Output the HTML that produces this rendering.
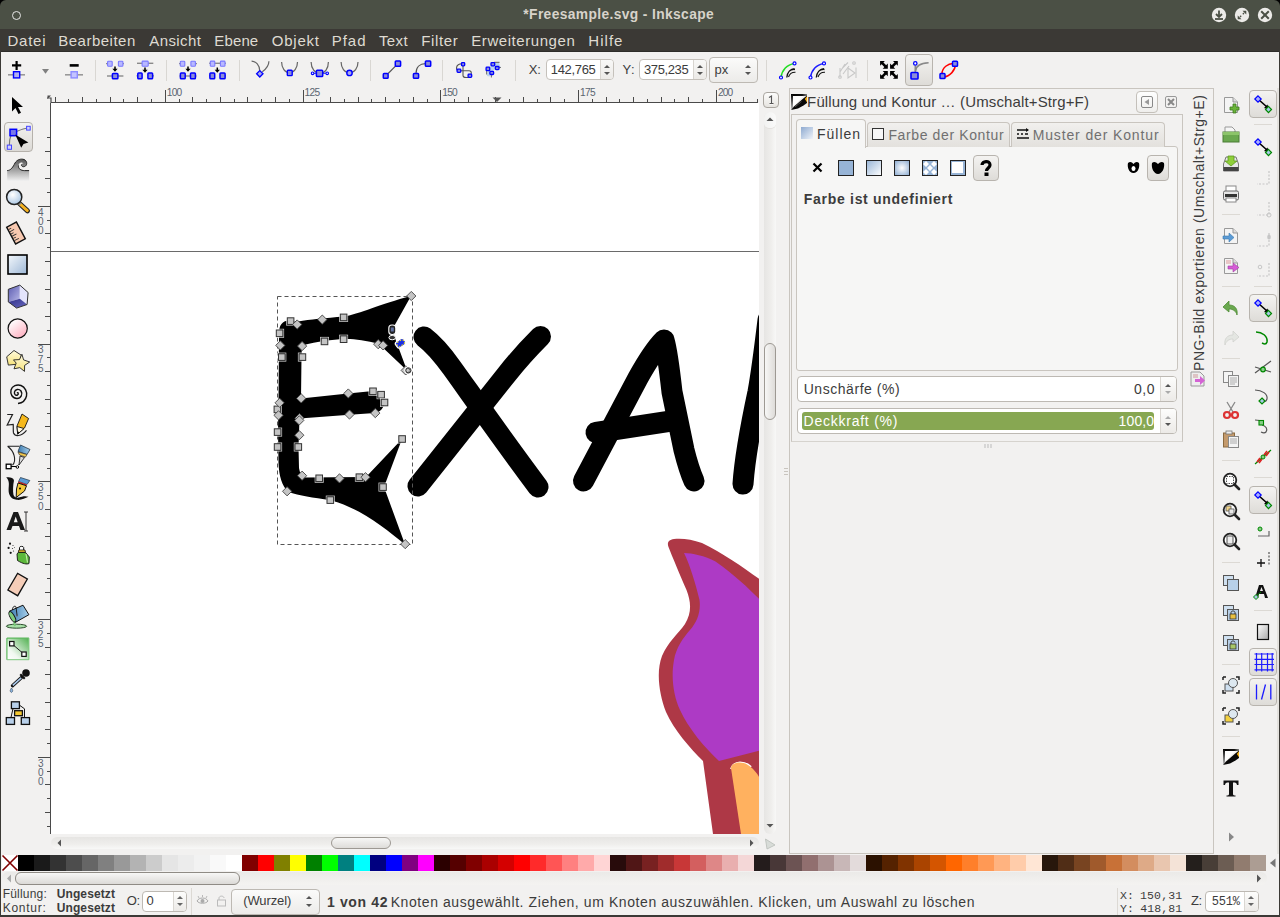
<!DOCTYPE html><html><head><meta charset="utf-8"><style>
*{box-sizing:border-box}
html,body{margin:0;padding:0}
body{width:1280px;height:917px;position:relative;overflow:hidden;background:#f2f1f0;font-family:"Liberation Sans",sans-serif;color:#3c3c3c}
.a{position:absolute}
.t{position:absolute;white-space:nowrap;line-height:1}
svg{position:absolute;overflow:visible}
</style></head><body>
<div class="a" style="left:0;top:0;width:1280px;height:29px;background:#000"></div><div class="a" style="left:0;top:0;width:1280px;height:29px;background:#4b5045;border-radius:6px 6px 0 0"></div><div class="a" style="left:12px;top:11px;width:9px;height:9px;border:1.3px solid #e6e6e6;border-radius:50%"></div><div class="t" style="left:523.33px;top:8.13px;font-size:13.8px;letter-spacing:0.375px;color:#dfdbd2;font-family:'Liberation Sans',sans-serif;font-weight:bold;-webkit-text-stroke:0;font-weight:600;opacity:0.95">*Freesample.svg - Inkscape</div><svg style="left:1219px;top:15px" width="1" height="1"><circle r="7.2" fill="#ecebe8"/><path d="M0,-4.5V1.5M-3,-1L0,2L3,-1" stroke="#4b5045" stroke-width="1.8" fill="none"/><path d="M-4,4H4" stroke="#4b5045" stroke-width="1.8"/></svg><svg style="left:1242px;top:15px" width="1" height="1"><circle r="7.2" fill="#ecebe8"/><path d="M0.5,-4.3H4.3V-0.5Z M-0.5,4.3H-4.3V0.5Z" fill="#4b5045"/><path d="M2,-2L0.8,-0.8M-2,2L-0.8,0.8" stroke="#4b5045" stroke-width="1.3"/></svg><svg style="left:1265px;top:15px" width="1" height="1"><circle r="7.2" fill="#ecebe8"/><path d="M-3.8,-3.8L3.8,3.8M3.8,-3.8L-3.8,3.8" stroke="#4b5045" stroke-width="2" fill="none"/></svg><div class="a" style="left:0;top:29px;width:1280px;height:23px;background:#3b3935"></div><div class="a" style="left:0;top:51px;width:1280px;height:1px;background:#2e2d2a"></div><div class="t" style="left:7.55px;top:33.31px;font-size:15px;letter-spacing:0.744px;color:#dfdbd2;font-family:'Liberation Sans',sans-serif;">Datei</div><div class="t" style="left:58.30px;top:33.31px;font-size:15px;letter-spacing:0.489px;color:#dfdbd2;font-family:'Liberation Sans',sans-serif;">Bearbeiten</div><div class="t" style="left:149.25px;top:33.31px;font-size:15px;letter-spacing:0.408px;color:#dfdbd2;font-family:'Liberation Sans',sans-serif;">Ansicht</div><div class="t" style="left:214.30px;top:33.31px;font-size:15px;letter-spacing:0.131px;color:#dfdbd2;font-family:'Liberation Sans',sans-serif;">Ebene</div><div class="t" style="left:271.82px;top:33.31px;font-size:15px;letter-spacing:0.745px;color:#dfdbd2;font-family:'Liberation Sans',sans-serif;">Objekt</div><div class="t" style="left:331.80px;top:33.31px;font-size:15px;letter-spacing:0.950px;color:#dfdbd2;font-family:'Liberation Sans',sans-serif;">Pfad</div><div class="t" style="left:378.95px;top:33.31px;font-size:15px;letter-spacing:0.392px;color:#dfdbd2;font-family:'Liberation Sans',sans-serif;">Text</div><div class="t" style="left:421.30px;top:33.31px;font-size:15px;letter-spacing:0.625px;color:#dfdbd2;font-family:'Liberation Sans',sans-serif;">Filter</div><div class="t" style="left:471.30px;top:33.31px;font-size:15px;letter-spacing:0.562px;color:#dfdbd2;font-family:'Liberation Sans',sans-serif;">Erweiterungen</div><div class="t" style="left:588.30px;top:33.31px;font-size:15px;letter-spacing:1.031px;color:#dfdbd2;font-family:'Liberation Sans',sans-serif;">Hilfe</div><div class="a" style="left:0;top:29px;width:1px;height:888px;background:#3b3935"></div><div class="a" style="left:1279px;top:29px;width:1px;height:888px;background:#3b3935"></div><div class="a" style="left:0;top:915px;width:1280px;height:2px;background:#3b3935"></div><svg style="left:5px;top:56px;" width="24" height="26" viewBox="0 0 24 26"><path d="M11.6,5V14M7,9.4H16.2" stroke="#000" stroke-width="2.2"/><path d="M3,18.8H20" stroke="#999" stroke-width="1.6"/><rect x="8.5" y="15.700000000000001" width="6.2" height="6.2" fill="#b0b0f0" stroke="#0000ff" stroke-width="1.4"/></svg><svg style="left:40px;top:66px;" width="12" height="10" viewBox="0 0 12 10"><path d="M2,3H9L5.5,7.8Z" fill="#808080"/></svg><svg style="left:62px;top:56px;" width="24" height="26" viewBox="0 0 24 26"><path d="M7.7,9.4H16.7" stroke="#000" stroke-width="2.6"/><path d="M3,18.8H21" stroke="#999" stroke-width="1.6"/><rect x="9.1" y="15.700000000000001" width="6.2" height="6.2" fill="#c4c4ff" stroke="#8c8cff" stroke-width="1.4"/></svg><div class="a" style="left:95px;top:60px;width:1px;height:21px;background:#d9d7d3"></div><svg style="left:0;top:52px" width="1280" height="36" viewBox="0 52 1280 36"><path d="M106,63.7H108" stroke="#8a8a8a" stroke-width="1.2"/><path d="M122.5,63.7H124" stroke="#8a8a8a" stroke-width="1.2"/><rect x="107.6" y="61.3" width="4.6000000000000085" height="4.900000000000006" rx="0.8" fill="#b8b8ff" stroke="#7a7aff" stroke-width="1.1"/><rect x="118.4" y="61.3" width="4.5" height="4.900000000000006" rx="0.8" fill="#b8b8ff" stroke="#7a7aff" stroke-width="1.1"/><path d="M115,66.5V69.8" stroke="#000" stroke-width="1.5"/><path d="M112.4,68.8H117.6L115,71.8Z" fill="#000"/><path d="M107,76H123.4" stroke="#8a8a8a" stroke-width="1.4"/><rect x="112.4" y="73.4" width="5.5" height="5.3999999999999915" rx="0.8" fill="#8c8cd8" stroke="#0000ff" stroke-width="1.5"/><path d="M137,63.3H153.3" stroke="#8a8a8a" stroke-width="1.4"/><rect x="142.1" y="61.1" width="6.099999999999994" height="5.100000000000001" rx="0.8" fill="#b8b8ff" stroke="#7a7aff" stroke-width="1.1"/><path d="M145,67.5V70.8" stroke="#000" stroke-width="1.5"/><path d="M142.4,69.8H147.6L145,72.8Z" fill="#000"/><path d="M136.5,75.8H138" stroke="#8a8a8a" stroke-width="1.2"/><path d="M152.3,75.8H154" stroke="#8a8a8a" stroke-width="1.2"/><rect x="137.8" y="73" width="4.299999999999983" height="5.700000000000003" rx="0.8" fill="#8c8cd8" stroke="#0000ff" stroke-width="1.5"/><rect x="147.9" y="73" width="4.699999999999989" height="5.700000000000003" rx="0.8" fill="#8c8cd8" stroke="#0000ff" stroke-width="1.5"/><path d="M179,63.7H181" stroke="#8a8a8a" stroke-width="1.2"/><path d="M195,63.7H197" stroke="#8a8a8a" stroke-width="1.2"/><rect x="180.3" y="61.3" width="4.5" height="4.900000000000006" rx="0.8" fill="#b8b8ff" stroke="#7a7aff" stroke-width="1.1"/><rect x="190.9" y="61.3" width="4.5" height="4.900000000000006" rx="0.8" fill="#b8b8ff" stroke="#7a7aff" stroke-width="1.1"/><path d="M188,66.5V69.8" stroke="#000" stroke-width="1.5"/><path d="M185.4,68.8H190.6L188,71.8Z" fill="#000"/><path d="M179.5,76H196.5" stroke="#8a8a8a" stroke-width="1.4"/><rect x="180.4" y="73" width="4.799999999999983" height="5.700000000000003" rx="0.8" fill="#8c8cd8" stroke="#0000ff" stroke-width="1.5"/><rect x="190.5" y="73" width="4.900000000000006" height="5.700000000000003" rx="0.8" fill="#8c8cd8" stroke="#0000ff" stroke-width="1.5"/><path d="M209.2,63.3H225.9" stroke="#8a8a8a" stroke-width="1.4"/><rect x="210.3" y="61.1" width="4.5" height="5.100000000000001" rx="0.8" fill="#b8b8ff" stroke="#7a7aff" stroke-width="1.1"/><rect x="220.4" y="61.1" width="4.599999999999994" height="5.100000000000001" rx="0.8" fill="#b8b8ff" stroke="#7a7aff" stroke-width="1.1"/><path d="M217.3,67.5V70.8" stroke="#000" stroke-width="1.5"/><path d="M214.70000000000002,69.8H219.9L217.3,72.8Z" fill="#000"/><path d="M209,75.8H210" stroke="#8a8a8a" stroke-width="1.2"/><path d="M224.5,75.8H226" stroke="#8a8a8a" stroke-width="1.2"/><rect x="209.9" y="73" width="4.799999999999983" height="5.700000000000003" rx="0.8" fill="#8c8cd8" stroke="#0000ff" stroke-width="1.5"/><rect x="220" y="73" width="5.099999999999994" height="5.700000000000003" rx="0.8" fill="#8c8cd8" stroke="#0000ff" stroke-width="1.5"/><path d="M251.6,61.2C256,61.5 259.6,65 259.8,71M262.3,71.8C266,69 268.9,65 268.9,61.2" stroke="#666" stroke-width="1.2" fill="none"/><path d="M259.8,70.6L263,73.8L259.8,77L256.6,73.8Z" fill="#a8a8e8" stroke="#00f" stroke-width="1.3"/><path d="M281.6,62.1C281.6,68 285,72.9 289.5,72.9C294,72.9 297.5,68 297.5,62.1" stroke="#666" stroke-width="1.2" fill="none"/><rect x="287.3" y="70.3" width="4.899999999999977" height="5.299999999999997" rx="0.8" fill="#8c8cd8" stroke="#0000ff" stroke-width="1.4"/><path d="M311.1,62.1C311.1,68.5 315,73.3 320,73.3C325,73.3 328.4,68.5 328.4,62.1" stroke="#666" stroke-width="1.2" fill="none"/><path d="M313,73.3H327" stroke="#00f" stroke-width="0.9"/><circle cx="312.6" cy="73.3" r="1.3" fill="#fff" stroke="#00f" stroke-width="1.1"/><circle cx="327.2" cy="73.3" r="1.3" fill="#fff" stroke="#00f" stroke-width="1.1"/><rect x="316.4" y="70.3" width="6.300000000000011" height="6.200000000000003" rx="0.8" fill="#8c8cd8" stroke="#0000ff" stroke-width="1.5"/><path d="M341.1,62.1C341.1,68 344.5,72.9 349.5,72.9C354.5,72.9 358,68 358,62.1" stroke="#666" stroke-width="1.2" fill="none"/><circle cx="349.5" cy="72.9" r="2.7" fill="#a8a8e8" stroke="#00f" stroke-width="1.4"/><path d="M385.6,76L398,63.6" stroke="#555" stroke-width="1.2"/><rect x="383.3" y="73.6" width="4.800000000000011" height="4.700000000000003" rx="0.8" fill="#8c8cd8" stroke="#0000ff" stroke-width="1.5"/><rect x="395.3" y="61" width="5.300000000000011" height="5.299999999999997" rx="0.8" fill="#8c8cd8" stroke="#0000ff" stroke-width="1.5"/><path d="M416,73.5C416,67 420,63.6 425.5,63.6" stroke="#555" stroke-width="1.2" fill="none"/><rect x="413.4" y="73.6" width="5.2000000000000455" height="4.700000000000003" rx="0.8" fill="#8c8cd8" stroke="#0000ff" stroke-width="1.5"/><rect x="425.4" y="61" width="5.300000000000011" height="5.299999999999997" rx="0.8" fill="#8c8cd8" stroke="#0000ff" stroke-width="1.5"/><path d="M463,63.8C459,63.5 456.5,65 456.5,68C456.5,70 457.5,71 459,70.8H469C471,70.8 471.5,72 471.2,74M463,64V75.5C463,77 464,77.5 466,77.5H469" stroke="#555" stroke-width="1.1" fill="none"/><rect x="461.5" y="62.6" width="3.1999999999999886" height="3.1999999999999957" rx="0.8" fill="#8c8cd8" stroke="#0000ff" stroke-width="1.3"/><rect x="457.1" y="69.2" width="3.6999999999999886" height="3.200000000000003" rx="0.8" fill="#8c8cd8" stroke="#0000ff" stroke-width="1.3"/><rect x="468.1" y="74.1" width="3.599999999999966" height="3.200000000000003" rx="0.8" fill="#8c8cd8" stroke="#0000ff" stroke-width="1.3"/><path d="M487,76C487,70 490,64 497,62.5L499,63L500.5,67L494,70L491,74L489.5,76.5Z" fill="#bcd3ea"/><path d="M494,62.4H499.5M499,67.5H501M491.4,74V77.5M486.6,70V74.5" stroke="#777" stroke-width="1.1"/><rect x="491" y="62.7" width="3.6999999999999886" height="3.0999999999999943" rx="0.8" fill="#8c8cd8" stroke="#0000ff" stroke-width="1.3"/><rect x="486.1" y="67.1" width="3.599999999999966" height="3.6000000000000085" rx="0.8" fill="#8c8cd8" stroke="#0000ff" stroke-width="1.3"/><rect x="495.4" y="66.5" width="3.6000000000000227" height="3.0999999999999943" rx="0.8" fill="#8c8cd8" stroke="#0000ff" stroke-width="1.3"/><rect x="489.9" y="71.4" width="3.7000000000000455" height="3.0999999999999943" rx="0.8" fill="#8c8cd8" stroke="#0000ff" stroke-width="1.3"/></svg><div class="a" style="left:95px;top:60px;width:1px;height:21px;background:#d9d7d3"></div><div class="a" style="left:166px;top:60px;width:1px;height:21px;background:#d9d7d3"></div><div class="a" style="left:239px;top:60px;width:1px;height:21px;background:#d9d7d3"></div><div class="a" style="left:370px;top:60px;width:1px;height:21px;background:#d9d7d3"></div><div class="a" style="left:442px;top:60px;width:1px;height:21px;background:#d9d7d3"></div><div class="a" style="left:515px;top:60px;width:1px;height:21px;background:#d9d7d3"></div><div class="t" style="left:528.77px;top:63.20px;font-size:13px;letter-spacing:-0.225px;color:#3c3c3c;font-family:'Liberation Sans',sans-serif;">X:</div><div class="a" style="left:546px;top:59px;width:68px;height:21px;background:#fff;border:1px solid #c5c1bb;border-radius:4px"></div><div class="a" style="left:600px;top:60px;width:13px;height:19px;background:linear-gradient(#f8f8f7,#eceae7);border-left:1px solid #d8d5d0;border-radius:0 3px 3px 0"></div><svg style="left:603.0px;top:62.5px;" width="8" height="14" viewBox="0 0 8 14"><path d="M1,5L4,2L7,5Z" fill="#555"/><path d="M1,9L4,12L7,9Z" fill="#555"/></svg><div class="t" style="left:550.82px;top:63.20px;font-size:13px;letter-spacing:-0.333px;color:#3c3c3c;font-family:'Liberation Sans',sans-serif;">142,765</div><div class="t" style="left:622.57px;top:63.20px;font-size:13px;letter-spacing:0.490px;color:#3c3c3c;font-family:'Liberation Sans',sans-serif;">Y:</div><div class="a" style="left:639px;top:59px;width:68px;height:21px;background:#fff;border:1px solid #c5c1bb;border-radius:4px"></div><div class="a" style="left:693px;top:60px;width:13px;height:19px;background:linear-gradient(#f8f8f7,#eceae7);border-left:1px solid #d8d5d0;border-radius:0 3px 3px 0"></div><svg style="left:696.0px;top:62.5px;" width="8" height="14" viewBox="0 0 8 14"><path d="M1,5L4,2L7,5Z" fill="#555"/><path d="M1,9L4,12L7,9Z" fill="#555"/></svg><div class="t" style="left:643.98px;top:63.20px;font-size:13px;letter-spacing:-0.376px;color:#3c3c3c;font-family:'Liberation Sans',sans-serif;">375,235</div><div class="a" style="left:709px;top:57px;width:49px;height:26px;background:linear-gradient(#fbfbfa,#ecebe9);border:1px solid #bdb9b3;border-radius:4px"></div><div class="t" style="left:714.55px;top:63.20px;font-size:13px;letter-spacing:-0.040px;color:#3c3c3c;font-family:'Liberation Sans',sans-serif;">px</div><svg style="left:744px;top:63px;" width="8" height="14" viewBox="0 0 8 14"><path d="M1,5L4,2L7,5Z" fill="#555"/><path d="M1,9L4,12L7,9Z" fill="#555"/></svg><div class="a" style="left:766px;top:60px;width:1px;height:21px;background:#d9d7d3"></div><div class="a" style="left:905px;top:54px;width:28px;height:32px;background:linear-gradient(#f4f3f1,#dedcd8);border:1px solid #b8b4ae;border-radius:4px;z-index:-0"></div><svg style="left:0;top:52px" width="1280" height="36" viewBox="0 52 1280 36"><g transform="translate(0,0)"><path d="M781,77.5C782,70 787,64.5 794.3,63.4" stroke="#22dd22" stroke-width="1.5" fill="none"/><path d="M786.8,77.5C787.5,72 790,69 795,69.5M789.5,71C791,69.5 792.5,68.8 794.5,68.6" stroke="#111" stroke-width="1.3" fill="none"/><path d="M788.5,77C789.5,74 791,72 795.5,72.2" stroke="#111" stroke-width="1.1" fill="none"/><circle cx="781" cy="77.5" r="1.5" fill="#fff" stroke="#00f" stroke-width="1.2"/><circle cx="794.5" cy="63.4" r="1.5" fill="#fff" stroke="#00f" stroke-width="1.2"/></g><g transform="translate(29.5,0)"><path d="M781,77.5C782,70 787,64.5 794.3,63.4" stroke="#1c1cff" stroke-width="1.5" fill="none"/><path d="M786.8,77.5C787.5,72 790,69 795,69.5M789.5,71C791,69.5 792.5,68.8 794.5,68.6" stroke="#111" stroke-width="1.3" fill="none"/><path d="M788.5,77C789.5,74 791,72 795.5,72.2" stroke="#111" stroke-width="1.1" fill="none"/><circle cx="781" cy="77.5" r="1.5" fill="#fff" stroke="#00f" stroke-width="1.2"/><circle cx="794.5" cy="63.4" r="1.5" fill="#fff" stroke="#00f" stroke-width="1.2"/></g><g stroke="#c8c8c8" fill="none" stroke-width="1.1"><path d="M840,77V68M840,72L845,64M842.5,68L848,62.5M843,74L849,66"/><path d="M848,68L855,73L848,78Z"/><path d="M856,67.5V78"/><circle cx="840" cy="77" r="1.3"/><circle cx="854" cy="63" r="1.3"/></g><g transform="translate(880.1,61) scale(1,1)"><path d="M0,0H4.8L0,4.8Z M7.7,7.7H2.6L7.7,2.6Z" fill="#000"/><path d="M1.2,1.2L6.4,6.4" stroke="#000" stroke-width="2.6"/></g><g transform="translate(897.8,61) scale(-1,1)"><path d="M0,0H4.8L0,4.8Z M7.7,7.7H2.6L7.7,2.6Z" fill="#000"/><path d="M1.2,1.2L6.4,6.4" stroke="#000" stroke-width="2.6"/></g><g transform="translate(880.1,78.8) scale(1,-1)"><path d="M0,0H4.8L0,4.8Z M7.7,7.7H2.6L7.7,2.6Z" fill="#000"/><path d="M1.2,1.2L6.4,6.4" stroke="#000" stroke-width="2.6"/></g><g transform="translate(897.8,78.8) scale(-1,-1)"><path d="M0,0H4.8L0,4.8Z M7.7,7.7H2.6L7.7,2.6Z" fill="#000"/><path d="M1.2,1.2L6.4,6.4" stroke="#000" stroke-width="2.6"/></g><path d="M915.3,65.5V72.5" stroke="#888" stroke-width="1.6"/><path d="M915.5,71C916,66 921,63 928.6,62.7" stroke="#888" stroke-width="1.6" fill="none"/><circle cx="915.3" cy="63.4" r="1.7" fill="#fff" stroke="#00f" stroke-width="1.3"/><rect x="911" y="72.5" width="7" height="6.5" rx="0.8" fill="#8c8cd8" stroke="#0000ff" stroke-width="1.6"/><path d="M942,73.8C942,68 948,63 954,63.5M943.5,77C950,76.5 955.5,70 955.3,64.5" stroke="#f00" stroke-width="1.5" fill="none"/><rect x="940" y="73.6" width="5" height="4.900000000000006" rx="0.8" fill="#8c8cd8" stroke="#0000ff" stroke-width="1.5"/><rect x="952.5" y="61.3" width="5.0" height="5.0" rx="0.8" fill="#8c8cd8" stroke="#0000ff" stroke-width="1.5"/></svg><div class="a" style="left:867px;top:60px;width:1px;height:21px;background:#d9d7d3"></div><div class="a" style="left:51px;top:103px;width:708px;height:731px;background:#fff"></div><div class="a" style="left:51px;top:102px;width:707px;height:1px;background:#4a4a4a"></div><div class="a" style="left:50px;top:103px;width:1px;height:731px;background:#4a4a4a"></div><svg style="left:47px;top:95px;" width="6" height="8" viewBox="0 0 6 8"><path d="M0,3H4V8" stroke="#4a4a4a" stroke-width="1.2" fill="none"/><path d="M0.5,0.5L4,0.5L0.5,4Z" fill="#4a4a4a"/></svg><div class="a" style="left:55px;top:97px;width:1px;height:5px;background:#4a4a4a"></div><div class="a" style="left:68px;top:99px;width:1px;height:3px;background:#4a4a4a"></div><div class="a" style="left:82px;top:97px;width:1px;height:5px;background:#4a4a4a"></div><div class="a" style="left:96px;top:99px;width:1px;height:3px;background:#4a4a4a"></div><div class="a" style="left:110px;top:97px;width:1px;height:5px;background:#4a4a4a"></div><div class="a" style="left:123px;top:99px;width:1px;height:3px;background:#4a4a4a"></div><div class="a" style="left:137px;top:97px;width:1px;height:5px;background:#4a4a4a"></div><div class="a" style="left:151px;top:99px;width:1px;height:3px;background:#4a4a4a"></div><div class="a" style="left:165px;top:90px;width:1px;height:12px;background:#4a4a4a"></div><div class="a" style="left:179px;top:99px;width:1px;height:3px;background:#4a4a4a"></div><div class="a" style="left:192px;top:97px;width:1px;height:5px;background:#4a4a4a"></div><div class="a" style="left:206px;top:99px;width:1px;height:3px;background:#4a4a4a"></div><div class="a" style="left:220px;top:97px;width:1px;height:5px;background:#4a4a4a"></div><div class="a" style="left:234px;top:99px;width:1px;height:3px;background:#4a4a4a"></div><div class="a" style="left:247px;top:97px;width:1px;height:5px;background:#4a4a4a"></div><div class="a" style="left:261px;top:99px;width:1px;height:3px;background:#4a4a4a"></div><div class="a" style="left:275px;top:97px;width:1px;height:5px;background:#4a4a4a"></div><div class="a" style="left:289px;top:99px;width:1px;height:3px;background:#4a4a4a"></div><div class="a" style="left:303px;top:90px;width:1px;height:12px;background:#4a4a4a"></div><div class="a" style="left:316px;top:99px;width:1px;height:3px;background:#4a4a4a"></div><div class="a" style="left:330px;top:97px;width:1px;height:5px;background:#4a4a4a"></div><div class="a" style="left:344px;top:99px;width:1px;height:3px;background:#4a4a4a"></div><div class="a" style="left:358px;top:97px;width:1px;height:5px;background:#4a4a4a"></div><div class="a" style="left:371px;top:99px;width:1px;height:3px;background:#4a4a4a"></div><div class="a" style="left:385px;top:97px;width:1px;height:5px;background:#4a4a4a"></div><div class="a" style="left:399px;top:99px;width:1px;height:3px;background:#4a4a4a"></div><div class="a" style="left:413px;top:97px;width:1px;height:5px;background:#4a4a4a"></div><div class="a" style="left:427px;top:99px;width:1px;height:3px;background:#4a4a4a"></div><div class="a" style="left:440px;top:90px;width:1px;height:12px;background:#4a4a4a"></div><div class="a" style="left:454px;top:99px;width:1px;height:3px;background:#4a4a4a"></div><div class="a" style="left:468px;top:97px;width:1px;height:5px;background:#4a4a4a"></div><div class="a" style="left:482px;top:99px;width:1px;height:3px;background:#4a4a4a"></div><div class="a" style="left:495px;top:97px;width:1px;height:5px;background:#4a4a4a"></div><div class="a" style="left:509px;top:99px;width:1px;height:3px;background:#4a4a4a"></div><div class="a" style="left:523px;top:97px;width:1px;height:5px;background:#4a4a4a"></div><div class="a" style="left:537px;top:99px;width:1px;height:3px;background:#4a4a4a"></div><div class="a" style="left:550px;top:97px;width:1px;height:5px;background:#4a4a4a"></div><div class="a" style="left:564px;top:99px;width:1px;height:3px;background:#4a4a4a"></div><div class="a" style="left:578px;top:90px;width:1px;height:12px;background:#4a4a4a"></div><div class="a" style="left:592px;top:99px;width:1px;height:3px;background:#4a4a4a"></div><div class="a" style="left:606px;top:97px;width:1px;height:5px;background:#4a4a4a"></div><div class="a" style="left:619px;top:99px;width:1px;height:3px;background:#4a4a4a"></div><div class="a" style="left:633px;top:97px;width:1px;height:5px;background:#4a4a4a"></div><div class="a" style="left:647px;top:99px;width:1px;height:3px;background:#4a4a4a"></div><div class="a" style="left:661px;top:97px;width:1px;height:5px;background:#4a4a4a"></div><div class="a" style="left:674px;top:99px;width:1px;height:3px;background:#4a4a4a"></div><div class="a" style="left:688px;top:97px;width:1px;height:5px;background:#4a4a4a"></div><div class="a" style="left:702px;top:99px;width:1px;height:3px;background:#4a4a4a"></div><div class="a" style="left:716px;top:90px;width:1px;height:12px;background:#4a4a4a"></div><div class="a" style="left:730px;top:99px;width:1px;height:3px;background:#4a4a4a"></div><div class="a" style="left:743px;top:97px;width:1px;height:5px;background:#4a4a4a"></div><div class="a" style="left:757px;top:99px;width:1px;height:3px;background:#4a4a4a"></div><div class="t" style="left:166.74px;top:88.27px;font-size:10.2px;letter-spacing:-0.730px;color:#5a6570;font-family:'Liberation Sans',sans-serif;">100</div><div class="t" style="left:304.49px;top:88.27px;font-size:10.2px;letter-spacing:-0.705px;color:#5a6570;font-family:'Liberation Sans',sans-serif;">125</div><div class="t" style="left:442.24px;top:88.27px;font-size:10.2px;letter-spacing:-0.730px;color:#5a6570;font-family:'Liberation Sans',sans-serif;">150</div><div class="t" style="left:579.99px;top:88.27px;font-size:10.2px;letter-spacing:-0.705px;color:#5a6570;font-family:'Liberation Sans',sans-serif;">175</div><div class="t" style="left:717.99px;top:88.27px;font-size:10.2px;letter-spacing:-0.858px;color:#5a6570;font-family:'Liberation Sans',sans-serif;">200</div><svg style="left:492px;top:97px;" width="10" height="6" viewBox="0 0 10 6"><path d="M0.5,0.5H9.5L5,5Z" fill="#555"/></svg><div class="a" style="left:47px;top:137px;width:3px;height:1px;background:#4a4a4a"></div><div class="a" style="left:45px;top:151px;width:5px;height:1px;background:#4a4a4a"></div><div class="a" style="left:47px;top:165px;width:3px;height:1px;background:#4a4a4a"></div><div class="a" style="left:45px;top:178px;width:5px;height:1px;background:#4a4a4a"></div><div class="a" style="left:47px;top:192px;width:3px;height:1px;background:#4a4a4a"></div><div class="a" style="left:38px;top:206px;width:12px;height:1px;background:#4a4a4a"></div><div class="a" style="left:47px;top:220px;width:3px;height:1px;background:#4a4a4a"></div><div class="a" style="left:45px;top:233px;width:5px;height:1px;background:#4a4a4a"></div><div class="a" style="left:47px;top:247px;width:3px;height:1px;background:#4a4a4a"></div><div class="a" style="left:45px;top:261px;width:5px;height:1px;background:#4a4a4a"></div><div class="a" style="left:47px;top:275px;width:3px;height:1px;background:#4a4a4a"></div><div class="a" style="left:45px;top:289px;width:5px;height:1px;background:#4a4a4a"></div><div class="a" style="left:47px;top:302px;width:3px;height:1px;background:#4a4a4a"></div><div class="a" style="left:45px;top:316px;width:5px;height:1px;background:#4a4a4a"></div><div class="a" style="left:47px;top:330px;width:3px;height:1px;background:#4a4a4a"></div><div class="a" style="left:38px;top:344px;width:12px;height:1px;background:#4a4a4a"></div><div class="a" style="left:47px;top:357px;width:3px;height:1px;background:#4a4a4a"></div><div class="a" style="left:45px;top:371px;width:5px;height:1px;background:#4a4a4a"></div><div class="a" style="left:47px;top:385px;width:3px;height:1px;background:#4a4a4a"></div><div class="a" style="left:45px;top:399px;width:5px;height:1px;background:#4a4a4a"></div><div class="a" style="left:47px;top:413px;width:3px;height:1px;background:#4a4a4a"></div><div class="a" style="left:45px;top:426px;width:5px;height:1px;background:#4a4a4a"></div><div class="a" style="left:47px;top:440px;width:3px;height:1px;background:#4a4a4a"></div><div class="a" style="left:45px;top:454px;width:5px;height:1px;background:#4a4a4a"></div><div class="a" style="left:47px;top:468px;width:3px;height:1px;background:#4a4a4a"></div><div class="a" style="left:38px;top:481px;width:12px;height:1px;background:#4a4a4a"></div><div class="a" style="left:47px;top:495px;width:3px;height:1px;background:#4a4a4a"></div><div class="a" style="left:45px;top:509px;width:5px;height:1px;background:#4a4a4a"></div><div class="a" style="left:47px;top:523px;width:3px;height:1px;background:#4a4a4a"></div><div class="a" style="left:45px;top:536px;width:5px;height:1px;background:#4a4a4a"></div><div class="a" style="left:47px;top:550px;width:3px;height:1px;background:#4a4a4a"></div><div class="a" style="left:45px;top:564px;width:5px;height:1px;background:#4a4a4a"></div><div class="a" style="left:47px;top:578px;width:3px;height:1px;background:#4a4a4a"></div><div class="a" style="left:45px;top:592px;width:5px;height:1px;background:#4a4a4a"></div><div class="a" style="left:47px;top:605px;width:3px;height:1px;background:#4a4a4a"></div><div class="a" style="left:38px;top:619px;width:12px;height:1px;background:#4a4a4a"></div><div class="a" style="left:47px;top:633px;width:3px;height:1px;background:#4a4a4a"></div><div class="a" style="left:45px;top:647px;width:5px;height:1px;background:#4a4a4a"></div><div class="a" style="left:47px;top:660px;width:3px;height:1px;background:#4a4a4a"></div><div class="a" style="left:45px;top:674px;width:5px;height:1px;background:#4a4a4a"></div><div class="a" style="left:47px;top:688px;width:3px;height:1px;background:#4a4a4a"></div><div class="a" style="left:45px;top:702px;width:5px;height:1px;background:#4a4a4a"></div><div class="a" style="left:47px;top:716px;width:3px;height:1px;background:#4a4a4a"></div><div class="a" style="left:45px;top:729px;width:5px;height:1px;background:#4a4a4a"></div><div class="a" style="left:47px;top:743px;width:3px;height:1px;background:#4a4a4a"></div><div class="a" style="left:38px;top:757px;width:12px;height:1px;background:#4a4a4a"></div><div class="a" style="left:47px;top:771px;width:3px;height:1px;background:#4a4a4a"></div><div class="a" style="left:45px;top:784px;width:5px;height:1px;background:#4a4a4a"></div><div class="a" style="left:47px;top:798px;width:3px;height:1px;background:#4a4a4a"></div><div class="a" style="left:45px;top:812px;width:5px;height:1px;background:#4a4a4a"></div><div class="a" style="left:47px;top:826px;width:3px;height:1px;background:#4a4a4a"></div><div class="t" style="left:38.10px;top:207.74px;font-size:10px;letter-spacing:0.000px;color:#5a6570;font-family:'Liberation Sans',sans-serif;">4</div><div class="t" style="left:37.90px;top:216.94px;font-size:10px;letter-spacing:0.000px;color:#5a6570;font-family:'Liberation Sans',sans-serif;">0</div><div class="t" style="left:37.90px;top:226.14px;font-size:10px;letter-spacing:0.000px;color:#5a6570;font-family:'Liberation Sans',sans-serif;">0</div><div class="t" style="left:37.90px;top:345.49px;font-size:10px;letter-spacing:0.000px;color:#5a6570;font-family:'Liberation Sans',sans-serif;">3</div><div class="t" style="left:37.80px;top:354.69px;font-size:10px;letter-spacing:0.000px;color:#5a6570;font-family:'Liberation Sans',sans-serif;">7</div><div class="t" style="left:37.90px;top:363.89px;font-size:10px;letter-spacing:0.000px;color:#5a6570;font-family:'Liberation Sans',sans-serif;">5</div><div class="t" style="left:37.90px;top:483.24px;font-size:10px;letter-spacing:0.000px;color:#5a6570;font-family:'Liberation Sans',sans-serif;">3</div><div class="t" style="left:37.90px;top:492.44px;font-size:10px;letter-spacing:0.000px;color:#5a6570;font-family:'Liberation Sans',sans-serif;">5</div><div class="t" style="left:37.90px;top:501.64px;font-size:10px;letter-spacing:0.000px;color:#5a6570;font-family:'Liberation Sans',sans-serif;">0</div><div class="t" style="left:37.90px;top:620.99px;font-size:10px;letter-spacing:0.000px;color:#5a6570;font-family:'Liberation Sans',sans-serif;">3</div><div class="t" style="left:37.80px;top:630.19px;font-size:10px;letter-spacing:0.000px;color:#5a6570;font-family:'Liberation Sans',sans-serif;">2</div><div class="t" style="left:37.90px;top:639.39px;font-size:10px;letter-spacing:0.000px;color:#5a6570;font-family:'Liberation Sans',sans-serif;">5</div><div class="t" style="left:37.90px;top:758.74px;font-size:10px;letter-spacing:0.000px;color:#5a6570;font-family:'Liberation Sans',sans-serif;">3</div><div class="t" style="left:37.90px;top:767.94px;font-size:10px;letter-spacing:0.000px;color:#5a6570;font-family:'Liberation Sans',sans-serif;">0</div><div class="t" style="left:37.90px;top:777.14px;font-size:10px;letter-spacing:0.000px;color:#5a6570;font-family:'Liberation Sans',sans-serif;">0</div><div class="a" style="left:51px;top:251px;width:708px;height:1px;background:#6a6a6a"></div><svg width="0" height="0" style="position:absolute"><defs>
<linearGradient id="gRect" x1="0" y1="0" x2="1" y2="1"><stop offset="0" stop-color="#f4f8fc"/><stop offset="1" stop-color="#9db7d6"/></linearGradient>
<linearGradient id="gPink" x1="0" y1="0" x2="0" y2="1"><stop offset="0" stop-color="#fff"/><stop offset="1" stop-color="#ffa3b8"/></linearGradient>
<linearGradient id="gWave" x1="0" y1="0" x2="0" y2="1"><stop offset="0" stop-color="#505050"/><stop offset="1" stop-color="#d0d0d0"/></linearGradient>
<linearGradient id="gGreen" x1="0" y1="0" x2="1" y2="1"><stop offset="0" stop-color="#e8f5e8"/><stop offset="1" stop-color="#3aa83a"/></linearGradient>
<linearGradient id="gBlue" x1="0" y1="0" x2="1" y2="0"><stop offset="0" stop-color="#3b7bb0"/><stop offset="1" stop-color="#a8d0ec"/></linearGradient>
<linearGradient id="gBox" x1="0" y1="0" x2="1" y2="0"><stop offset="0" stop-color="#6a6ab0"/><stop offset="1" stop-color="#c8c8f0"/></linearGradient>
<radialGradient id="gLens" cx=".4" cy=".35" r=".7"><stop offset="0" stop-color="#fff"/><stop offset="1" stop-color="#a9c6e3"/></radialGradient>
</defs></svg><svg style="left:5px;top:93px" width="24" height="24" viewBox="0 0 24 24"><path d="M7,4V18.5L10.5,15L13.5,21L16,19.8L13,14H18Z" fill="#000"/></svg><div class="a" style="left:4px;top:122px;width:29px;height:30px;background:linear-gradient(#f3f2f0,#dcdad6);border:1px solid #b5b1ab;border-radius:4px"></div><svg style="left:5px;top:125px" width="24" height="24" viewBox="0 0 24 24"><path d="M4.4,20C4.4,12 6,8 10,7C14,5.5 18,3.5 22,3.2" stroke="#777" stroke-width="1.1" fill="none"/><rect x="5" y="4.3" width="6.6" height="6.4" fill="#7878e8" stroke="#00f" stroke-width="1.5"/><rect x="21.6" y="1.3" width="3.6" height="3.8" fill="#d0d0ff" stroke="#44f" stroke-width="1"/><rect x="2.3" y="20.1" width="4.2" height="4.2" fill="#d0d0ff" stroke="#44f" stroke-width="1"/><path d="M10.2,9.6L23.4,17.6L18.5,19L16.2,22.8Z" fill="#000"/></svg><svg style="left:5px;top:157px" width="24" height="24" viewBox="0 0 24 24"><defs><linearGradient id="gWv" x1="0" y1="0" x2="0" y2="1"><stop offset="0" stop-color="#555"/><stop offset="1" stop-color="#f0f0f0"/></linearGradient></defs><path d="M2.2,23.9V13.6C6,13.4 8,10 10,6C12,2.5 16,1.5 19,2.5C22,3.5 22.5,7.5 20.5,9C18.5,10.5 16,9.5 16.5,7.5C17,6 18.5,6.5 18.5,7C17,4.5 14,5.5 13.5,8.5C13,12 16,13.5 19.5,13.6H24.1V23.9Z" fill="url(#gWv)"/><path d="M2.2,13.6C6,13.4 8,10 10,6C12,2.5 16,1.5 19,2.5C22,3.5 22.5,7.5 20.5,9C18.5,10.5 16,9.5 16.5,7.5M13.5,8.5C13,12 16,13.5 19.5,13.6H24.1" stroke="#222" stroke-width="1" fill="none"/></svg><svg style="left:5px;top:189px" width="24" height="24" viewBox="0 0 24 24"><path d="M14.5,14.5L22.5,21.8" stroke="#222" stroke-width="5" stroke-linecap="round"/><path d="M15,15L22.3,21.6" stroke="#f5b120" stroke-width="3" stroke-linecap="round"/><path d="M13.5,13.5L15.5,15.5" stroke="#888" stroke-width="3"/><circle cx="9.2" cy="8" r="7.6" fill="url(#gLens)" stroke="#222" stroke-width="1.5"/></svg><svg style="left:5px;top:221px" width="24" height="24" viewBox="0 0 24 24"><g transform="rotate(-28 11 12)"><rect x="5.5" y="2.5" width="11" height="19" fill="#f8c9b0" stroke="#111" stroke-width="1.4"/><path d="M6,5.5H9M6,8H11M6,10.5H9M6,13H11M6,15.5H9M6,18H11" stroke="#333" stroke-width="0.9"/></g></svg><svg style="left:5px;top:253px" width="24" height="24" viewBox="0 0 24 24"><rect x="3" y="2" width="19" height="19" fill="url(#gRect)" stroke="#000" stroke-width="1.6"/></svg><svg style="left:5px;top:285px" width="24" height="24" viewBox="0 0 24 24"><defs><linearGradient id="gBL" x1="0" y1="0" x2="1" y2="1"><stop offset="0" stop-color="#5a5ab0"/><stop offset="1" stop-color="#b8b8e8"/></linearGradient><linearGradient id="gBB" x1="0" y1="0" x2="1" y2="1"><stop offset="0" stop-color="#303088"/><stop offset="1" stop-color="#6868c0"/></linearGradient></defs><path d="M3.3,4.3L14.8,0.1L14.8,13.7L3.3,16.9Z" fill="url(#gBL)"/><path d="M14.8,0.1L23.1,7.5L22.1,19.5L14.8,13.7Z" fill="#e4e4fc"/><path d="M3.3,16.9L14.8,13.7L22.1,19.5L11.6,23.1Z" fill="url(#gBB)"/><path d="M3.3,4.3L14.8,0.1L23.1,7.5L22.1,19.5L11.6,23.1L3.3,16.9Z" fill="none" stroke="#333" stroke-width="1"/></svg><svg style="left:5px;top:317px" width="24" height="24" viewBox="0 0 24 24"><defs><linearGradient id="gPk2" x1="0.2" y1="0.1" x2="0.8" y2="0.9"><stop offset="0" stop-color="#fff"/><stop offset="1" stop-color="#ffb3c3"/></linearGradient></defs><circle cx="12.7" cy="11.5" r="9.6" fill="url(#gPk2)" stroke="#111" stroke-width="1.2"/></svg><svg style="left:5px;top:349px" width="24" height="24" viewBox="0 0 24 24"><defs><linearGradient id="gY" x1="0" y1="0" x2="0" y2="1"><stop offset="0" stop-color="#fffbe0"/><stop offset="1" stop-color="#f6e27a"/></linearGradient></defs><path d="M1.7,7.8L9,1.5L16.3,6.2L14,15L3.3,16.1Z" fill="url(#gY)" stroke="#222" stroke-width="0.9"/><path d="M16.9,5.2L18.6,10.9L24.7,13L19.6,16.4L19.5,22.4L14.8,18.6L9,19.8L11.2,14.1L8.5,10.9L14.5,10.6Z" fill="url(#gY)" stroke="#222" stroke-width="0.9"/></svg><svg style="left:5px;top:381px" width="24" height="24" viewBox="0 0 24 24"><path d="M12,12C13,11 14,13 12.5,14C10.5,15 9,13 9.5,11C10,8 14,7.5 16,10C18,13 16,17.5 12,17.5C7.5,17.5 5,13 6,9C7,5 12,3 16,4.5C20,6 22.5,11 21.5,15C20.5,19.5 17,22 13,22.5" stroke="#111" stroke-width="1.4" fill="none"/></svg><svg style="left:5px;top:413px" width="24" height="24" viewBox="0 0 24 24"><path d="M2.2,1.5H7.5L2.2,12L8.2,11.3C8.5,14 8,18 8.5,20C10,23.5 16,24 21.5,17.3" stroke="#222" stroke-width="1.2" fill="none"/><path d="M12.7,21.1L12,13L17,1L23.6,5.5L19.5,15Z" fill="#f5b81c" stroke="#111" stroke-width="0.9"/><path d="M12.7,21.1L12,13.5L19,15.5Z" fill="#fff8e0" stroke="#111" stroke-width="0.9"/><path d="M12.7,21.1L12.4,18.5L14.5,19Z" fill="#000"/></svg><svg style="left:5px;top:445px" width="24" height="24" viewBox="0 0 24 24"><path d="M2.6,1.3H14.5M2.6,1.3C9,6 12,15 7.5,20.2" stroke="#222" stroke-width="1.1" fill="none"/><rect x="1.2" y="19.2" width="4.9" height="4.5" fill="#fff" stroke="#000" stroke-width="1.3"/><path d="M6,21.5H11" stroke="#000" stroke-width="1"/><circle cx="12.4" cy="22" r="1.3" fill="#fff" stroke="#000" stroke-width="1"/><path d="M15.5,0L25,4.5L22,9.5L13,6.5Z" fill="url(#gBlue)" stroke="#234" stroke-width="0.8"/><path d="M13,7L22,9.5L20.5,12L14.5,10Z" fill="#f2c94c" stroke="#333" stroke-width="0.7"/><path d="M15,11L19.5,12.5L14,20ZM14,20L13.5,19.5" fill="#ddd" stroke="#222" stroke-width="0.9"/></svg><svg style="left:5px;top:477px" width="24" height="24" viewBox="0 0 24 24"><path d="M1.2,0.2C6,0 9.5,1.5 8.9,4C8,8 7.8,14 8.4,17.5C9,20.5 12,21 14,20.5C17,19.5 20,18.5 23.5,19.8C20,21.5 16,23.5 11.5,22.8C6,22 3.5,18 3.6,13C3.7,8 5,4 1.2,0.2Z" fill="#111"/><path d="M15.5,0.5L24.8,3.5L22,7.5L13.5,4.5Z" fill="#5b9bd5" stroke="#234" stroke-width="0.7"/><path d="M13.5,4.5L22,7.5L21.5,8.8L13,6Z" fill="#d42020"/><path d="M13,6L21.5,8.8L19.5,14L11.2,20.5L11.5,12Z" fill="#f3c83a" stroke="#111" stroke-width="1"/><circle cx="15" cy="11.5" r="1" fill="#000"/></svg><svg style="left:5px;top:509px" width="24" height="24" viewBox="0 0 24 24"><path d="M1.5,21L8.5,3H13L20,21H15.5L14,17H7.5L6,21ZM8.8,13.2H12.7L10.7,7.5Z" fill="#1a1a1a"/><path d="M19,3H23M21,3V22M19,22H23" stroke="#222" stroke-width="0.9"/></svg><svg style="left:5px;top:541px" width="24" height="24" viewBox="0 0 24 24"><circle cx="5" cy="2.7" r="1.1" fill="#111"/><circle cx="3.6" cy="6.9" r="1.1" fill="#111"/><circle cx="5.7" cy="11.8" r="1.1" fill="#111"/><circle cx="8" cy="4.5" r="0.6" fill="#333"/><circle cx="7.5" cy="7.5" r="0.6" fill="#333"/><circle cx="9.5" cy="6.5" r="0.5" fill="#555"/><circle cx="8.5" cy="10" r="0.6" fill="#333"/><path d="M14.5,9V6.5C14.5,5 18.7,5 18.7,6.5V9" fill="#fff" stroke="#111" stroke-width="1"/><path d="M13.8,9H20L20.5,11.4H13.3Z" fill="#f0c030" stroke="#111" stroke-width="0.8"/><path d="M13.3,11.4H20.5L24.3,16L24,22.5C22,23.5 18,23 12.5,19.5L12,13Z" fill="#5cb83a" stroke="#111" stroke-width="0.9"/><path d="M21,13L22.5,21.5" stroke="#c8f0b0" stroke-width="1.1"/></svg><svg style="left:5px;top:573px" width="24" height="24" viewBox="0 0 24 24"><g transform="rotate(30 12.6 11.5)"><rect x="7" y="1.8" width="11.3" height="19.4" fill="#f5cdb8" stroke="#111" stroke-width="1.3"/></g></svg><svg style="left:5px;top:605px" width="24" height="24" viewBox="0 0 24 24"><ellipse cx="11.5" cy="21.2" rx="10.2" ry="2" fill="#a8e0a8" stroke="#1a3a1a" stroke-width="0.9"/><path d="M9,17L10,21" stroke="#7ccc7c" stroke-width="2"/><path d="M4.3,6.2L18,0.2L23.9,9.7L10.3,17.4Z" fill="url(#gBlue)" stroke="#111" stroke-width="1"/><ellipse cx="7.3" cy="11.8" rx="2.2" ry="5.8" transform="rotate(-30 7.3 11.8)" fill="#7ccc7c" stroke="#111" stroke-width="0.9"/><path d="M7.5,5C7,2 10,0 11,2L12,10" stroke="#111" stroke-width="0.9" fill="none"/><circle cx="12" cy="10.5" r="0.9" fill="#555"/></svg><svg style="left:5px;top:637px" width="24" height="24" viewBox="0 0 24 24"><defs><linearGradient id="gGr2" x1="0" y1="1" x2="1" y2="0"><stop offset="0" stop-color="#fff"/><stop offset="0.3" stop-color="#f0f8f0"/><stop offset="1" stop-color="#50b050"/></linearGradient></defs><rect x="1.9" y="1.1" width="22" height="21.6" fill="url(#gGr2)"/><path d="M1.9,1.1H23.9M1.9,1.1V22.7" stroke="#5cb85c" stroke-width="1.2"/><path d="M1.9,22.7H23.9V1.1" stroke="#7cc87c" stroke-width="1" fill="none"/><path d="M6.8,6.7L19,17.2" stroke="#222" stroke-width="1"/><rect x="4.6" y="4.5" width="4.4" height="4.4" fill="#fff" stroke="#111" stroke-width="1.2"/><rect x="16.8" y="15" width="4.4" height="4.4" fill="#fff" stroke="#111" stroke-width="1.2"/></svg><svg style="left:5px;top:669px" width="24" height="24" viewBox="0 0 24 24"><path d="M7.5,16.7L16.5,8.5" stroke="#111" stroke-width="3.4" stroke-linecap="round"/><path d="M7.8,16.4L16.2,8.8" stroke="#a9c8ea" stroke-width="1.7"/><path d="M14.5,6L19,10.5L20.5,9L16,4.5Z" fill="#111"/><circle cx="21" cy="4" r="3.8" fill="#111"/><path d="M6.5,19C5,21 4.5,22.5 6.4,23.5C8.3,22.5 8,21 6.5,19Z" fill="#8ab4e0" stroke="#345" stroke-width="0.6"/></svg><svg style="left:5px;top:701px" width="24" height="24" viewBox="0 0 24 24"><path d="M8,7.5L6,16.5M14.5,4.2L19.5,7.8V16.5" stroke="#111" stroke-width="1" fill="none"/><rect x="6.4" y="0.8" width="8" height="6.8" fill="#b8d0ea" stroke="#111" stroke-width="1.3"/><rect x="9.6" y="9.7" width="7.8" height="5" fill="#f4c832" stroke="#111" stroke-width="1.3"/><rect x="1.3" y="16.6" width="8.2" height="6.8" fill="#b8d0ea" stroke="#111" stroke-width="1.3"/><rect x="16.3" y="16.6" width="8.2" height="6.8" fill="#b8d0ea" stroke="#111" stroke-width="1.3"/></svg><svg style="left:51px;top:103px;overflow:hidden" width="708" height="731" viewBox="51 103 708 731"><g><path d="M674,539 C668,540 667,543 668.5,547 C672,556 680,575 686.5,590 C691,602 692,612 685,624 C678,634 668,642 662,656 C656,672 659,694 666,712 C674,730 690,748 703,761 L713,834 L770,834 L770,587 C750,572 728,556 702,543 C692,539.5 682,538 674,539 Z" fill="#ae3846"/><path d="M684,553 C690,565 696,585 699.5,600 C701,612 697,622 690,630 C683,638 676,648 674,660 C671,676 673,695 680,710 C688,728 705,748 719,761 L770,748 L770,610 C758,598 742,580 715.5,561.4 C705,556 692,553 684,553 Z" fill="#ad3ac5"/><path d="M731,769 C733,764 737,762.5 740,762.5 C745,762.5 749,765 751,767" stroke="#fff" stroke-width="2" fill="none"/><path d="M731,768 C731,764 736,762.5 740,762.5 C749,762.5 757,772 762,782 L770,834 L741,834 Z" fill="#ffb15f"/><path d="M279,334 C279,325 282,320.5 290,320.5 L298,321.5 C310,319.5 325,318 344,316.5 C360,314 380,304 411,296 L392,330 L407,370.5 L379,344 C365,340 352,338.5 344,339 C332,339.5 318,341.5 302,345.5 L301.5,357 L301,398.5 L348,393.5 L373,391 C380,391 386,394 385,402 C384,408 380,412 375,413 L349.5,414.8 L299.5,418.5 L298.5,447 L299,468 C300,474 302,477 306,477.5 L366,477 L402,439 L384,487 L405,544.5 C385,528 360,508 331,500.5 C312,497 300,496.5 288,491.5 C282,486 279,476 278.5,463 L278,430 L278.5,400 Z" fill="#000"/><path d="M424,337 C432,343 442,354 452,368 C470,393 500,436 538,487" stroke="#000" stroke-width="21" stroke-linecap="round" stroke-linejoin="round" fill="none"/><path d="M540.5,336.5 C530,347 518,360 507,374 L418,486" stroke="#000" stroke-width="21" stroke-linecap="round" stroke-linejoin="round" fill="none"/><path d="M583.5,481 L638,378 C648,360 656,348 664,340 C667,350 669,365 672,392 L684,450 C687,462 690,472 694,481" stroke="#000" stroke-width="21" stroke-linecap="round" stroke-linejoin="round" fill="none"/><path d="M596,432.5 L668,421.5" stroke="#000" stroke-width="21" stroke-linecap="round" stroke-linejoin="round" fill="none"/><path d="M743,484 C745,455 752,420 758,392 C762,370 765,345 768,320" stroke="#000" stroke-width="21" stroke-linecap="round" stroke-linejoin="round" fill="none"/><rect x="277.5" y="296.5" width="135" height="248" fill="none" stroke="#555" stroke-width="1" stroke-dasharray="4,3"/><rect x="286.6" y="317.1" width="8" height="8" fill="none" stroke="#fff" stroke-width="1" opacity="0.8"/><rect x="287.3" y="317.8" width="6.6" height="6.6" fill="#c4c4c4" stroke="#333" stroke-width="1"/><rect x="339.6" y="313.4" width="8" height="8" fill="none" stroke="#fff" stroke-width="1" opacity="0.8"/><rect x="340.3" y="314.1" width="6.6" height="6.6" fill="#c4c4c4" stroke="#333" stroke-width="1"/><rect x="275.6" y="329.3" width="8" height="8" fill="none" stroke="#fff" stroke-width="1" opacity="0.8"/><rect x="276.3" y="330.0" width="6.6" height="6.6" fill="#c4c4c4" stroke="#333" stroke-width="1"/><rect x="320.5" y="337.4" width="8" height="8" fill="none" stroke="#fff" stroke-width="1" opacity="0.8"/><rect x="321.2" y="338.1" width="6.6" height="6.6" fill="#c4c4c4" stroke="#333" stroke-width="1"/><rect x="339.6" y="335.2" width="8" height="8" fill="none" stroke="#fff" stroke-width="1" opacity="0.8"/><rect x="340.3" y="335.9" width="6.6" height="6.6" fill="#c4c4c4" stroke="#333" stroke-width="1"/><rect x="277.8" y="353.1" width="8" height="8" fill="none" stroke="#fff" stroke-width="1" opacity="0.8"/><rect x="278.5" y="353.8" width="6.6" height="6.6" fill="#c4c4c4" stroke="#333" stroke-width="1"/><rect x="298.4" y="353.1" width="8" height="8" fill="none" stroke="#fff" stroke-width="1" opacity="0.8"/><rect x="299.1" y="353.8" width="6.6" height="6.6" fill="#c4c4c4" stroke="#333" stroke-width="1"/><rect x="369.0" y="387.3" width="8" height="8" fill="none" stroke="#fff" stroke-width="1" opacity="0.8"/><rect x="369.7" y="388.0" width="6.6" height="6.6" fill="#c4c4c4" stroke="#333" stroke-width="1"/><rect x="377.1" y="390.7" width="8" height="8" fill="none" stroke="#fff" stroke-width="1" opacity="0.8"/><rect x="377.8" y="391.4" width="6.6" height="6.6" fill="#c4c4c4" stroke="#333" stroke-width="1"/><rect x="380.5" y="398.5" width="8" height="8" fill="none" stroke="#fff" stroke-width="1" opacity="0.8"/><rect x="381.2" y="399.2" width="6.6" height="6.6" fill="#c4c4c4" stroke="#333" stroke-width="1"/><rect x="273.4" y="405.4" width="8" height="8" fill="none" stroke="#fff" stroke-width="1" opacity="0.8"/><rect x="274.1" y="406.1" width="6.6" height="6.6" fill="#c4c4c4" stroke="#333" stroke-width="1"/><rect x="273.6" y="428.1" width="8" height="8" fill="none" stroke="#fff" stroke-width="1" opacity="0.8"/><rect x="274.3" y="428.8" width="6.6" height="6.6" fill="#c4c4c4" stroke="#333" stroke-width="1"/><rect x="273.6" y="443.0" width="8" height="8" fill="none" stroke="#fff" stroke-width="1" opacity="0.8"/><rect x="274.3" y="443.7" width="6.6" height="6.6" fill="#c4c4c4" stroke="#333" stroke-width="1"/><rect x="294.3" y="443.0" width="8" height="8" fill="none" stroke="#fff" stroke-width="1" opacity="0.8"/><rect x="295.0" y="443.7" width="6.6" height="6.6" fill="#c4c4c4" stroke="#333" stroke-width="1"/><rect x="398.1" y="435.0" width="8" height="8" fill="none" stroke="#fff" stroke-width="1" opacity="0.8"/><rect x="398.8" y="435.7" width="6.6" height="6.6" fill="#c4c4c4" stroke="#333" stroke-width="1"/><rect x="315.2" y="474.3" width="8" height="8" fill="none" stroke="#fff" stroke-width="1" opacity="0.8"/><rect x="315.9" y="475.0" width="6.6" height="6.6" fill="#c4c4c4" stroke="#333" stroke-width="1"/><rect x="355.4" y="473.2" width="8" height="8" fill="none" stroke="#fff" stroke-width="1" opacity="0.8"/><rect x="356.1" y="473.9" width="6.6" height="6.6" fill="#c4c4c4" stroke="#333" stroke-width="1"/><rect x="379.0" y="483.1" width="8" height="8" fill="none" stroke="#fff" stroke-width="1" opacity="0.8"/><rect x="379.7" y="483.8" width="6.6" height="6.6" fill="#c4c4c4" stroke="#333" stroke-width="1"/><rect x="326.3" y="496.1" width="8" height="8" fill="none" stroke="#fff" stroke-width="1" opacity="0.8"/><rect x="327.0" y="496.8" width="6.6" height="6.6" fill="#c4c4c4" stroke="#333" stroke-width="1"/><path d="M297.2,319.9L301.8,324.5L297.2,329.1L292.6,324.5Z" fill="#c4c4c4" stroke="#444" stroke-width="0.9"/><path d="M322.3,315.0L326.9,319.6L322.3,324.2L317.7,319.6Z" fill="#c4c4c4" stroke="#444" stroke-width="0.9"/><path d="M411.3,291.4L415.9,296.0L411.3,300.6L406.7,296.0Z" fill="#c4c4c4" stroke="#444" stroke-width="0.9"/><path d="M280.3,340.8L284.9,345.4L280.3,350.0L275.7,345.4Z" fill="#c4c4c4" stroke="#444" stroke-width="0.9"/><path d="M302.1,341.5L306.7,346.1L302.1,350.7L297.5,346.1Z" fill="#c4c4c4" stroke="#444" stroke-width="0.9"/><path d="M378.2,339.6L382.8,344.2L378.2,348.8L373.6,344.2Z" fill="#c4c4c4" stroke="#444" stroke-width="0.9"/><path d="M383.1,340.8L387.7,345.4L383.1,350.0L378.5,345.4Z" fill="#c4c4c4" stroke="#444" stroke-width="0.9"/><path d="M405.7,365.8L410.3,370.4L405.7,375.0L401.1,370.4Z" fill="#c4c4c4" stroke="#444" stroke-width="0.9"/><path d="M301.2,393.8L305.8,398.4L301.2,403.0L296.6,398.4Z" fill="#c4c4c4" stroke="#444" stroke-width="0.9"/><path d="M348.3,388.9L352.9,393.5L348.3,398.1L343.7,393.5Z" fill="#c4c4c4" stroke="#444" stroke-width="0.9"/><path d="M279.6,398.2L284.2,402.8L279.6,407.4L275.0,402.8Z" fill="#c4c4c4" stroke="#444" stroke-width="0.9"/><path d="M278.5,410.7L283.1,415.3L278.5,419.9L273.9,415.3Z" fill="#c4c4c4" stroke="#444" stroke-width="0.9"/><path d="M349.5,409.9L354.1,414.5L349.5,419.1L344.9,414.5Z" fill="#c4c4c4" stroke="#444" stroke-width="0.9"/><path d="M375.3,408.5L379.9,413.1L375.3,417.7L370.7,413.1Z" fill="#c4c4c4" stroke="#444" stroke-width="0.9"/><path d="M299.4,413.6L304.0,418.2L299.4,422.8L294.8,418.2Z" fill="#c4c4c4" stroke="#444" stroke-width="0.9"/><path d="M299.3,415.8L303.9,420.4L299.3,425.0L294.7,420.4Z" fill="#c4c4c4" stroke="#444" stroke-width="0.9"/><path d="M299.3,430.6L303.9,435.2L299.3,439.8L294.7,435.2Z" fill="#c4c4c4" stroke="#444" stroke-width="0.9"/><path d="M302.1,471.1L306.7,475.7L302.1,480.3L297.5,475.7Z" fill="#c4c4c4" stroke="#444" stroke-width="0.9"/><path d="M339.5,473.8L344.1,478.4L339.5,483.0L334.9,478.4Z" fill="#c4c4c4" stroke="#444" stroke-width="0.9"/><path d="M365.5,472.6L370.1,477.2L365.5,481.8L360.9,477.2Z" fill="#c4c4c4" stroke="#444" stroke-width="0.9"/><path d="M287.1,486.7L291.7,491.3L287.1,495.9L282.5,491.3Z" fill="#c4c4c4" stroke="#444" stroke-width="0.9"/><path d="M405.2,539.5L409.8,544.1L405.2,548.7L400.6,544.1Z" fill="#c4c4c4" stroke="#444" stroke-width="0.9"/><rect x="388.8" y="325" width="7" height="9.5" rx="3" fill="#222" stroke="#fff" stroke-width="1.1"/><rect x="390.8" y="327.5" width="3" height="4" fill="#6070a0"/><ellipse cx="392.2" cy="337.6" rx="3.3" ry="2.2" fill="#333" stroke="#fff" stroke-width="1"/><g transform="rotate(-35 400.6 343.2)"><rect x="395.6" y="339.6" width="10" height="7.2" rx="2.5" fill="#1a2ee6" stroke="#fff" stroke-width="1.3"/><rect x="396.8" y="340.8" width="7.6" height="4.8" rx="1.5" fill="none" stroke="#f0e020" stroke-width="1" stroke-dasharray="1.5,1.5"/></g><circle cx="408.4" cy="370.4" r="3.6" fill="none" stroke="#fff" stroke-width="1.2"/><circle cx="408.4" cy="370.4" r="2.6" fill="none" stroke="#222" stroke-width="1"/></g></svg><div class="a" style="left:759px;top:88px;width:30px;height:765px;background:#f2f1f0"></div><div class="a" style="left:763px;top:92px;width:16px;height:16px;background:linear-gradient(#fdfdfc,#e6e4e0);border:1px solid #aaa6a0;border-radius:4px"></div><svg style="left:766px;top:95px;" width="10" height="10" viewBox="0 0 10 10"><path d="M3,2.5L5.5,1V8.5H7M3.5,8.5H5.5" stroke="#fff" stroke-width="2.6" fill="none" opacity="0.8"/><path d="M3,2.5L5.5,1V8.5M3.5,8.5H7.5" stroke="#555" stroke-width="1.2" fill="none"/></svg><div class="a" style="left:764px;top:112px;width:12px;height:722px;background:linear-gradient(90deg,#e6e5e3,#efeeec 60%,#f8f8f7);border-radius:6px"></div><div class="a" style="left:764px;top:112px;width:12px;height:16px;background:linear-gradient(90deg,#f2f2f1,#fafafa);border-radius:6px 6px 5px 5px;box-shadow:0 1px 0 #e3e1de"></div><svg style="left:766px;top:116px;" width="8" height="6" viewBox="0 0 8 6"><path d="M0.5,5L4,1.5L7.5,5Z" fill="#555"/></svg><svg style="left:766px;top:823px;" width="8" height="6" viewBox="0 0 8 6"><path d="M0.5,1L4,4.5L7.5,1Z" fill="#555"/></svg><div class="a" style="left:764px;top:343px;width:12px;height:77px;background:linear-gradient(90deg,#f7f7f6,#dedcd9);border:1px solid #9d9993;border-radius:6px"></div><div class="a" style="left:51px;top:837px;width:708px;height:12px;background:linear-gradient(#e6e5e3,#efeeec 60%,#f8f8f7);border-radius:6px"></div><svg style="left:56px;top:839px;" width="6" height="8" viewBox="0 0 6 8"><path d="M5,0.5L1.5,4L5,7.5Z" fill="#555"/></svg><svg style="left:749px;top:839px;" width="6" height="8" viewBox="0 0 6 8"><path d="M1,0.5L4.5,4L1,7.5Z" fill="#555"/></svg><div class="a" style="left:331px;top:837px;width:60px;height:12px;background:linear-gradient(#f7f7f6,#dedcd9);border:1px solid #9d9993;border-radius:6px"></div><svg style="left:764px;top:838px;" width="12" height="12" viewBox="0 0 12 12"><path d="M1.5,1L11,7L3,11Z" fill="#d8dcd8" stroke="#b8bcb8" stroke-width="0.8"/></svg><div class="a" style="left:789px;top:88px;width:425px;height:766px;border-left:1px solid #c9c5bf;border-top:1px solid #c9c5bf"></div><div class="a" style="left:1213px;top:88px;width:1px;height:766px;background:#c9c5bf"></div><div class="a" style="left:789px;top:853px;width:425px;height:1px;background:#c9c5bf"></div><svg style="left:791px;top:94px;" width="16" height="16" viewBox="0 0 16 16"><defs><linearGradient id="tiL" x1="0" y1="0" x2="0" y2="1"><stop offset="0" stop-color="#000"/><stop offset="1" stop-color="#bbb"/></linearGradient><linearGradient id="tiT" x1="0" y1="0" x2="1" y2="0"><stop offset="0" stop-color="#000"/><stop offset="0.7" stop-color="#111"/><stop offset="1" stop-color="#888"/></linearGradient></defs><path d="M0,0H16V2H0Z" fill="url(#tiT)"/><path d="M0,0H2V15H0Z" fill="url(#tiL)"/><path d="M2,2H12.5L2,12.5Z" fill="#fff"/><path d="M0,16L3,12.5L10.5,6L13.5,3.5L16,1.5V9L12.5,11.5L7,14.5Z" fill="#080808"/><path d="M4.5,12.5L10.5,7.5" stroke="#aaa" stroke-width="0.7" stroke-dasharray="1.5,1"/><path d="M13.8,5L16,2.2V8.2Z" fill="#f8b010"/></svg><div class="t" style="left:807.10px;top:94.01px;font-size:15px;letter-spacing:0.136px;color:#3c3c3c;font-family:'Liberation Sans',sans-serif;">Füllung und Kontur … (Umschalt+Strg+F)</div><div class="a" style="left:1136px;top:91px;width:22px;height:22px;background:linear-gradient(#fefefe,#efeeec);border:1px solid #c4c0ba;border-radius:4px"></div><svg style="left:1141px;top:96px;" width="12" height="12" viewBox="0 0 12 12"><rect x="0.5" y="0.5" width="11" height="11" rx="1.5" fill="none" stroke="#888" stroke-width="1"/><path d="M8,3V9L3.5,6Z" fill="#999"/></svg><svg style="left:1165px;top:96px;" width="12" height="12" viewBox="0 0 12 12"><rect x="0.5" y="0.5" width="11" height="11" rx="1.5" fill="none" stroke="#999" stroke-width="1"/><path d="M3,3L9,9M9,3L3,9" stroke="#888" stroke-width="2"/></svg><div class="a" style="left:791px;top:114px;width:392px;height:328px;border:1px solid #c9c5bf;border-bottom-color:#d6d3ce"></div><div class="a" style="left:796px;top:146px;width:382px;height:225px;background:#f6f6f5;border:1px solid #c9c5bf;border-radius:0 3px 3px 3px"></div><div class="a" style="left:867px;top:122px;width:143px;height:25px;background:linear-gradient(#f1f0ee,#e3e1dd);border:1px solid #c9c5bf;border-bottom:none;border-radius:4px 4px 0 0"></div><div class="a" style="left:1011px;top:122px;width:154px;height:25px;background:linear-gradient(#f1f0ee,#e3e1dd);border:1px solid #c9c5bf;border-bottom:none;border-radius:4px 4px 0 0"></div><div class="a" style="left:796px;top:119px;width:70px;height:29px;background:#f6f6f5;border:1px solid #c9c5bf;border-bottom:none;border-radius:4px 4px 0 0"></div><svg style="left:801px;top:127px;" width="12" height="12" viewBox="0 0 12 12"><defs><linearGradient id="tg" x1="0" y1="0" x2="1" y2="1"><stop offset="0" stop-color="#8eaad0"/><stop offset="1" stop-color="#f0f4fa"/></linearGradient></defs><rect x="0" y="0" width="12" height="12" fill="url(#tg)"/></svg><div class="t" style="left:817.08px;top:126.66px;font-size:14px;letter-spacing:0.956px;color:#3c3c3c;font-family:'Liberation Sans',sans-serif;">Füllen</div><svg style="left:872px;top:128px;" width="12" height="12" viewBox="0 0 12 12"><rect x="0.5" y="0.5" width="11" height="11" fill="#f6f6f6" stroke="#333" stroke-width="1"/></svg><div class="t" style="left:888.38px;top:127.76px;font-size:14px;letter-spacing:0.624px;color:#707070;font-family:'Liberation Sans',sans-serif;">Farbe der Kontur</div><svg style="left:1016px;top:127px;" width="14" height="14" viewBox="0 0 14 14"><path d="M1,3H12M1,7H3M5,7H7M9,7H12M1,11H13" stroke="#111" stroke-width="1.3"/><path d="M10,1L13,3L10,5Z" fill="#111"/></svg><div class="t" style="left:1032.68px;top:128.16px;font-size:14px;letter-spacing:0.864px;color:#707070;font-family:'Liberation Sans',sans-serif;">Muster der Kontur</div><svg style="left:812px;top:162px;" width="11" height="11" viewBox="0 0 11 11"><path d="M1.5,1.5L9.5,9.5M9.5,1.5L1.5,9.5" stroke="#000" stroke-width="2.2"/></svg><svg style="left:838px;top:160px;" width="16" height="16" viewBox="0 0 16 16"><rect x="0.5" y="0.5" width="15" height="15" fill="#97b4d6" stroke="#222" stroke-width="1"/></svg><svg style="left:866px;top:160px;" width="16" height="16" viewBox="0 0 16 16"><defs><linearGradient id="pl" x1="0" y1="0" x2="1" y2="1"><stop offset="0" stop-color="#97b4d6"/><stop offset="1" stop-color="#fff"/></linearGradient><radialGradient id="pr" cx=".5" cy=".5" r=".6"><stop offset="0" stop-color="#fff"/><stop offset="1" stop-color="#97b4d6"/></radialGradient></defs><rect x="0.5" y="0.5" width="15" height="15" fill="url(#pl)" stroke="#222" stroke-width="1"/></svg><svg style="left:894px;top:160px;" width="16" height="16" viewBox="0 0 16 16"><rect x="0.5" y="0.5" width="15" height="15" fill="url(#pr)" stroke="#222" stroke-width="1"/></svg><svg style="left:922px;top:160px;" width="16" height="16" viewBox="0 0 16 16"><rect x="0.5" y="0.5" width="15" height="15" fill="#97b4d6" stroke="#222" stroke-width="1"/><path d="M4,1L7,4L4,7L1,4ZM12,1L15,4L12,7L9,4ZM8,5L11,8L8,11L5,8ZM4,9L7,12L4,15L1,12ZM12,9L15,12L12,15L9,12Z" fill="#fff"/></svg><svg style="left:950px;top:160px;" width="16" height="16" viewBox="0 0 16 16"><rect x="0.5" y="0.5" width="15" height="15" fill="#97b4d6" stroke="#222" stroke-width="1"/><rect x="2" y="2" width="11" height="11" fill="#fff"/></svg><div class="a" style="left:973px;top:155px;width:26px;height:26px;background:linear-gradient(#f4f3f1,#dedcd8);border:1px solid #b8b4ae;border-radius:4px"></div><svg style="left:979px;top:159px;" width="14" height="18" viewBox="0 0 14 18"><path d="M3,6C3,2 11,1 11,6C11,9 7.5,9 7.5,12" stroke="#000" stroke-width="3.2" fill="none"/><rect x="5.5" y="13.5" width="4" height="3.5" fill="#000"/></svg><svg style="left:1127px;top:161px;" width="13" height="13" viewBox="0 0 13 13"><path d="M1,2C3,0 5,1 6.5,3C8,1 10,0 12,2C13,6 11,12 6.5,12C2,12 0,6 1,2Z" fill="#000"/><ellipse cx="6.5" cy="7.5" rx="2" ry="2.5" fill="#fff"/></svg><div class="a" style="left:1147px;top:155px;width:22px;height:26px;background:linear-gradient(#f4f3f1,#dedcd8);border:1px solid #b8b4ae;border-radius:4px"></div><svg style="left:1151px;top:161px;" width="14" height="14" viewBox="0 0 14 14"><path d="M1,2C3,0 5,1 7,3C9,1 11,0 13,2C14,7 11,13 7,13C3,13 0,7 1,2Z" fill="#000"/></svg><div class="t" style="left:803.84px;top:191.91px;font-size:14px;letter-spacing:0.700px;color:#3c3c3c;font-family:'Liberation Sans',sans-serif;font-weight:bold;">Farbe ist undefiniert</div><div class="a" style="left:797px;top:376px;width:380px;height:26px;background:#fff;border:1px solid #bdb9b3;border-radius:4px"></div><div class="a" style="left:1160px;top:377px;width:16px;height:24px;background:linear-gradient(#fdfdfc,#eceae7);border-left:1px solid #dad7d2;border-radius:0 3px 3px 0"></div><svg style="left:1164px;top:381px;" width="8" height="16" viewBox="0 0 8 16"><path d="M1,6L4,3L7,6Z" fill="#555"/><path d="M1,10L4,13L7,10Z" fill="#aaa"/></svg><div class="t" style="left:803.65px;top:382.06px;font-size:14px;letter-spacing:0.552px;color:#3c3c3c;font-family:'Liberation Sans',sans-serif;">Unschärfe (%)</div><div class="t" style="left:1133.94px;top:382.16px;font-size:14px;letter-spacing:0.595px;color:#3c3c3c;font-family:'Liberation Sans',sans-serif;">0,0</div><div class="a" style="left:797px;top:408px;width:380px;height:26px;background:#fff;border:1px solid #bdb9b3;border-radius:4px"></div><div class="a" style="left:1160px;top:409px;width:16px;height:24px;background:linear-gradient(#fdfdfc,#eceae7);border-left:1px solid #dad7d2;border-radius:0 3px 3px 0"></div><div class="a" style="left:802px;top:412px;width:352px;height:18px;background:#87a752;border-radius:3px"></div><svg style="left:1164px;top:413px;" width="8" height="16" viewBox="0 0 8 16"><path d="M1,6L4,3L7,6Z" fill="#aaa"/><path d="M1,10L4,13L7,10Z" fill="#555"/></svg><div class="t" style="left:803.58px;top:413.96px;font-size:14px;letter-spacing:0.757px;color:#ffffff;font-family:'Liberation Sans',sans-serif;">Deckkraft (%)</div><div class="t" style="left:1118.55px;top:413.76px;font-size:14px;letter-spacing:0.135px;color:#ffffff;font-family:'Liberation Sans',sans-serif;">100,0</div><svg style="left:983px;top:443px;" width="10" height="6" viewBox="0 0 10 6"><path d="M2,1V5M5,1V5M8,1V5" stroke="#bbb" stroke-width="1"/></svg><svg style="left:783px;top:467px;" width="6" height="10" viewBox="0 0 6 10"><path d="M1,1.5H5M1,4.5H5M1,7.5H5" stroke="#c8c4be" stroke-width="1"/></svg><div class="t" style="left:1192.06px;top:370.82px;font-size:14px;letter-spacing:0.558px;color:#3c3c3c;transform-origin:0 0;transform:rotate(-90deg)">PNG-Bild exportieren (Umschalt+Strg+E)</div><svg style="left:1190px;top:371px;" width="16" height="16" viewBox="0 0 16 16"><path d="M1,1H10L14,5V15H1Z" fill="#eee" stroke="#999" stroke-width="1"/><path d="M3,4H8M3,6H8" stroke="#c99" stroke-width="1"/><path d="M5,8H10V5L15,9.5L10,14V11H5Z" fill="#d463d4"/></svg><svg style="left:1222px;top:96px" width="18" height="18" viewBox="0 0 18 18"><path d="M2.5,1.5H11L15.5,6V16.5H2.5Z" fill="#f4f4f4" stroke="#999" stroke-width="1"/><path d="M11,1.5V6H15.5" fill="#ddd" stroke="#999" stroke-width="1"/><path d="M11,8V11H8V14H11V17H14V14H17V11H14V8Z" fill="#6ab43a" stroke="#3c7a1e" stroke-width="0.8"/></svg><svg style="left:1222px;top:125px" width="18" height="18" viewBox="0 0 18 18"><path d="M3,2H10L13,5V10H3Z" fill="#f6f6f6" stroke="#999" stroke-width="1"/><rect x="1" y="7" width="16" height="10" fill="#6aa84f" stroke="#4a7c34" stroke-width="1"/><rect x="1" y="7" width="16" height="3" fill="#8cc46a"/></svg><svg style="left:1222px;top:154.5px" width="18" height="18" viewBox="0 0 18 18"><path d="M1.5,9L4,2H14L16.5,9V16H1.5Z" fill="#e8e8e8" stroke="#777" stroke-width="1"/><rect x="1.5" y="12" width="15" height="4" fill="#444"/><path d="M6,1H12V6H15L9,11L3,6H6Z" fill="#8fcf3a" stroke="#5d9a1e" stroke-width="0.8"/></svg><svg style="left:1222px;top:185px" width="18" height="18" viewBox="0 0 18 18"><rect x="4" y="1" width="10" height="6" fill="#fff" stroke="#888" stroke-width="1"/><rect x="1.5" y="6" width="15" height="9" rx="1.5" fill="#e6e6e6" stroke="#666" stroke-width="1"/><rect x="3" y="9" width="12" height="3" fill="#333"/><rect x="4" y="13" width="10" height="4" fill="#fff" stroke="#888" stroke-width="1"/></svg><div class="a" style="left:1222px;top:214px;width:18px;height:1px;background:#dcd9d4"></div><svg style="left:1222px;top:226.5px" width="18" height="18" viewBox="0 0 18 18"><path d="M2.5,1.5H11L15.5,6V16.5H2.5Z" fill="#f4f4f4" stroke="#999" stroke-width="1"/><path d="M11,1.5V6H15.5" fill="#ddd" stroke="#999" stroke-width="1"/><path d="M1,9H7V6L12,10.5L7,15V12H1Z" fill="#5b9bd5" stroke="#3a78b0" stroke-width="0.6"/></svg><svg style="left:1222px;top:257px" width="18" height="18" viewBox="0 0 18 18"><path d="M2.5,1.5H11L15.5,6V16.5H2.5Z" fill="#f4f4f4" stroke="#999" stroke-width="1"/><path d="M11,1.5V6H15.5" fill="#ddd" stroke="#999" stroke-width="1"/><path d="M4,4H9M4,6H9" stroke="#d99" stroke-width="1"/><path d="M6,9H11V6L17,10.5L11,15V12H6Z" fill="#d65cd6" stroke="#a040a0" stroke-width="0.6"/></svg><div class="a" style="left:1222px;top:286px;width:18px;height:1px;background:#dcd9d4"></div><svg style="left:1222px;top:299px" width="18" height="18" viewBox="0 0 18 18"><path d="M7,2L1,8L7,13V10C11,10 14,12 15,16C16,10 13,6 7,6Z" fill="#6aa84f" stroke="#4d8a34" stroke-width="0.8"/></svg><svg style="left:1222px;top:329px" width="18" height="18" viewBox="0 0 18 18"><path d="M11,2L17,8L11,13V10C7,10 4,12 3,16C2,10 5,6 11,6Z" fill="#e4e6e2" stroke="#d0d2ce" stroke-width="0.8"/></svg><div class="a" style="left:1222px;top:358px;width:18px;height:1px;background:#dcd9d4"></div><svg style="left:1222px;top:370px" width="18" height="18" viewBox="0 0 18 18"><rect x="1.5" y="1.5" width="9" height="11" fill="#f4f4f4" stroke="#888" stroke-width="1"/><rect x="6.5" y="5.5" width="10" height="11" fill="#f4f4f4" stroke="#888" stroke-width="1"/><path d="M8,8H15M8,10H15M8,12H15M8,14H13" stroke="#999" stroke-width="0.8"/></svg><svg style="left:1222px;top:401px" width="18" height="18" viewBox="0 0 18 18"><path d="M5,1L11,11M13,1L7,11" stroke="#888" stroke-width="1.3"/><circle cx="5" cy="14" r="3" fill="none" stroke="#d33" stroke-width="2.2"/><circle cx="13" cy="14" r="3" fill="none" stroke="#d33" stroke-width="2.2"/></svg><svg style="left:1222px;top:430px" width="18" height="18" viewBox="0 0 18 18"><rect x="1.5" y="3" width="11" height="14" fill="#c49a6c" stroke="#8a6a40" stroke-width="1"/><rect x="4" y="1" width="6" height="3" fill="#eee" stroke="#777" stroke-width="0.8"/><rect x="6.5" y="6.5" width="10" height="11" fill="#f4f4f4" stroke="#888" stroke-width="1"/><path d="M8,9H15M8,11H15M8,13H15" stroke="#999" stroke-width="0.8"/></svg><div class="a" style="left:1222px;top:460px;width:18px;height:1px;background:#dcd9d4"></div><svg style="left:1222px;top:472px" width="18" height="18" viewBox="0 0 18 18"><circle cx="8" cy="8" r="6.3" fill="#fff" stroke="#222" stroke-width="1.8"/><path d="M12.5,12.5L17,17" stroke="#222" stroke-width="2.6" stroke-linecap="round"/><rect x="4.5" y="4.5" width="7" height="7" fill="none" stroke="#555" stroke-width="1" stroke-dasharray="1.5,1"/></svg><svg style="left:1222px;top:502px" width="18" height="18" viewBox="0 0 18 18"><circle cx="8" cy="8" r="6.3" fill="#fff" stroke="#222" stroke-width="1.8"/><path d="M12.5,12.5L17,17" stroke="#222" stroke-width="2.6" stroke-linecap="round"/><rect x="4" y="4" width="5" height="5" fill="#f2d58a" stroke="#555" stroke-width="0.8"/><rect x="7" y="7" width="5" height="5" fill="#e8e8e8" stroke="#555" stroke-width="0.8"/></svg><svg style="left:1222px;top:532px" width="18" height="18" viewBox="0 0 18 18"><circle cx="8" cy="8" r="6.3" fill="#fff" stroke="#222" stroke-width="1.8"/><path d="M12.5,12.5L17,17" stroke="#222" stroke-width="2.6" stroke-linecap="round"/><rect x="5" y="4" width="6" height="8" fill="#eee" stroke="#555" stroke-width="1"/></svg><div class="a" style="left:1222px;top:562px;width:18px;height:1px;background:#dcd9d4"></div><svg style="left:1222px;top:574px" width="18" height="18" viewBox="0 0 18 18"><rect x="1.5" y="1.5" width="10" height="10" fill="#cfe0f0" stroke="#555" stroke-width="1"/><rect x="5.5" y="5.5" width="11" height="11" fill="#b8d0e8" stroke="#555" stroke-width="1"/></svg><svg style="left:1222px;top:604px" width="18" height="18" viewBox="0 0 18 18"><rect x="1.5" y="1.5" width="10" height="10" fill="#cfe0f0" stroke="#555" stroke-width="1"/><rect x="5.5" y="5.5" width="11" height="11" fill="#b8d0e8" stroke="#555" stroke-width="1"/><rect x="8" y="10" width="6" height="5" fill="#e8c040" stroke="#333" stroke-width="0.8"/><path d="M9,10V8.5C9,6.5 13,6.5 13,8.5V10" stroke="#333" stroke-width="1" fill="none"/></svg><svg style="left:1222px;top:634px" width="18" height="18" viewBox="0 0 18 18"><rect x="1.5" y="1.5" width="10" height="10" fill="#cfe0f0" stroke="#555" stroke-width="1"/><rect x="5.5" y="5.5" width="11" height="11" fill="#b8d0e8" stroke="#555" stroke-width="1"/><rect x="8" y="10" width="6" height="5" fill="#a8c868" stroke="#333" stroke-width="0.8"/><path d="M9,10V8.5C9,6.5 13,6.5 13,8.5" stroke="#333" stroke-width="1" fill="none"/></svg><div class="a" style="left:1222px;top:664px;width:18px;height:1px;background:#dcd9d4"></div><svg style="left:1222px;top:676px" width="18" height="18" viewBox="0 0 18 18"><path d="M1,1H4M14,1H17V4M17,14V17H14M4,17H1V14M1,4V1" stroke="#222" stroke-width="1.5" fill="none"/><rect x="3" y="8" width="8" height="7" fill="#cfe0f0" stroke="#555" stroke-width="1"/><circle cx="11" cy="7" r="4.5" fill="#dde8f0" stroke="#555" stroke-width="1"/></svg><svg style="left:1222px;top:707px" width="18" height="18" viewBox="0 0 18 18"><path d="M1,1H4M14,1H17V4M17,14V17H14M4,17H1V14M1,4V1" stroke="#222" stroke-width="1.5" fill="none"/><rect x="3" y="8" width="8" height="7" fill="#f2d040" stroke="#555" stroke-width="1"/><circle cx="11" cy="7" r="4.5" fill="#dde8f0" stroke="#555" stroke-width="1"/></svg><div class="a" style="left:1222px;top:736px;width:18px;height:1px;background:#dcd9d4"></div><svg style="left:1223px;top:749px;" width="16" height="16" viewBox="0 0 16 16"><path d="M0,0H16V2H0Z" fill="url(#tiT)"/><path d="M0,0H2V15H0Z" fill="url(#tiL)"/><path d="M2,2H12.5L2,12.5Z" fill="#fff"/><path d="M0,16L3,12.5L10.5,6L13.5,3.5L16,1.5V9L12.5,11.5L7,14.5Z" fill="#080808"/><path d="M13.8,5L16,2.2V8.2Z" fill="#f8b010"/></svg><svg style="left:1222px;top:779px" width="18" height="18" viewBox="0 0 18 18"><path d="M1.5,1.5H16.5V6H15C14.5,4 14,3.5 11,3.5V15C11,16 12,16.5 13.5,16.5V17.5H4.5V16.5C6,16.5 7,16 7,15V3.5C4,3.5 3.5,4 3,6H1.5Z" fill="#111"/></svg><svg style="left:1228px;top:832px;" width="7" height="10" viewBox="0 0 7 10"><path d="M1,0.5L6,5L1,9.5Z" fill="#888"/></svg><div class="a" style="left:1277px;top:88px;width:2px;height:766px;background:#e4e2de"></div><div class="a" style="left:1249px;top:90px;width:28px;height:28px;background:linear-gradient(#f4f3f1,#dedcd8);border:1px solid #b8b4ae;border-radius:4px"></div><svg style="left:1254px;top:95px" width="18" height="18" viewBox="0 0 18 18"><path d="M4,4L13.5,12.5" stroke="#000" stroke-width="1.6"/><path d="M10,13L15,14.5L13.5,9.5Z" fill="#000"/><path d="M4,0.8L7.2,4L4,7.2L0.8,4Z" fill="#aab0ff" stroke="#00f" stroke-width="1.2"/><path d="M14.5,11.3L17.5,14.5L14.5,17.7L11.5,14.5Z" fill="#a8c8e8" stroke="#080" stroke-width="1.2"/></svg><div class="a" style="left:1254px;top:124px;width:18px;height:1px;background:#dcd9d4"></div><svg style="left:1254px;top:138px" width="18" height="18" viewBox="0 0 18 18"><path d="M4,4L13.5,12.5" stroke="#000" stroke-width="1.6"/><path d="M10,13L15,14.5L13.5,9.5Z" fill="#000"/><path d="M4,0.8L7.2,4L4,7.2L0.8,4Z" fill="#aab0ff" stroke="#00f" stroke-width="1.2"/><path d="M14.5,11.3L17.5,14.5L14.5,17.7L11.5,14.5Z" fill="#a8c8e8" stroke="#080" stroke-width="1.2"/></svg><svg style="left:1254px;top:169px" width="18" height="18" viewBox="0 0 18 18"><path d="M15,2V15H3" stroke="#c6c6c6" stroke-width="1.2" stroke-dasharray="2,1.5" fill="none"/></svg><svg style="left:1254px;top:200px" width="18" height="18" viewBox="0 0 18 18"><path d="M15,2V15H3" stroke="#c6c6c6" stroke-width="1.2" stroke-dasharray="2,1.5" fill="none"/><circle cx="15" cy="15" r="2" fill="none" stroke="#c6c6c6"/></svg><svg style="left:1254px;top:231px" width="18" height="18" viewBox="0 0 18 18"><path d="M15,2V15H3" stroke="#c6c6c6" stroke-width="1.2" stroke-dasharray="2,1.5" fill="none"/><ellipse cx="15" cy="6" rx="1.8" ry="2.5" fill="#c6c6c6"/></svg><svg style="left:1254px;top:261px" width="18" height="18" viewBox="0 0 18 18"><path d="M15,2V15H3" stroke="#c6c6c6" stroke-width="1.2" stroke-dasharray="2,1.5" fill="none"/><circle cx="6" cy="6" r="1.8" fill="none" stroke="#c6c6c6"/></svg><div class="a" style="left:1254px;top:286px;width:18px;height:1px;background:#dcd9d4"></div><div class="a" style="left:1249px;top:294px;width:28px;height:28px;background:linear-gradient(#f4f3f1,#dedcd8);border:1px solid #b8b4ae;border-radius:4px"></div><svg style="left:1254px;top:299px" width="18" height="18" viewBox="0 0 18 18"><path d="M4,4L13.5,12.5" stroke="#000" stroke-width="1.6"/><path d="M10,13L15,14.5L13.5,9.5Z" fill="#000"/><path d="M4,0.8L7.2,4L4,7.2L0.8,4Z" fill="#aab0ff" stroke="#00f" stroke-width="1.2"/><path d="M14.5,11.3L17.5,14.5L14.5,17.7L11.5,14.5Z" fill="#a8c8e8" stroke="#080" stroke-width="1.2"/></svg><svg style="left:1254px;top:329px" width="18" height="18" viewBox="0 0 18 18"><path d="M2,3C8,3 14,7 13,13C12,16 10,15 8,14" stroke="#080" stroke-width="1.6" fill="none"/></svg><svg style="left:1254px;top:358px" width="18" height="18" viewBox="0 0 18 18"><path d="M1,15L17,3M1,9L17,14" stroke="#555" stroke-width="1.2"/><circle cx="9" cy="11.5" r="2.3" fill="#8c8" stroke="#080" stroke-width="1.2"/></svg><svg style="left:1254px;top:388px" width="18" height="18" viewBox="0 0 18 18"><path d="M1,2C8,2 14,6 13,11C12,14 10,14 8,13" stroke="#555" stroke-width="1.2" fill="none"/><path d="M8,10L11,13L8,16L5,13Z" fill="#a8c8e8" stroke="#080" stroke-width="1.2"/></svg><svg style="left:1254px;top:417px" width="18" height="18" viewBox="0 0 18 18"><path d="M1,3C5,3 7,4 8,5M8,8C12,9 14,12 12,15C11,16 9,16 7,15" stroke="#555" stroke-width="1.2" fill="none"/><rect x="5" y="3.5" width="4.5" height="4.5" fill="#8c8" stroke="#080" stroke-width="1.1"/></svg><svg style="left:1254px;top:448px" width="18" height="18" viewBox="0 0 18 18"><path d="M1,16L17,2" stroke="#080" stroke-width="1.2"/><path d="M3,14L6,10M5,15L8,11M10,7L13,3M12,8L15,4" stroke="#d22" stroke-width="1.6"/><circle cx="9" cy="9" r="2" fill="#8c8" stroke="#080" stroke-width="1"/></svg><div class="a" style="left:1254px;top:477px;width:18px;height:1px;background:#dcd9d4"></div><div class="a" style="left:1249px;top:486px;width:28px;height:28px;background:linear-gradient(#f4f3f1,#dedcd8);border:1px solid #b8b4ae;border-radius:4px"></div><svg style="left:1254px;top:491px" width="18" height="18" viewBox="0 0 18 18"><path d="M4,4L13.5,12.5" stroke="#000" stroke-width="1.6"/><path d="M10,13L15,14.5L13.5,9.5Z" fill="#000"/><path d="M4,0.8L7.2,4L4,7.2L0.8,4Z" fill="#aab0ff" stroke="#00f" stroke-width="1.2"/><path d="M14.5,11.3L17.5,14.5L14.5,17.7L11.5,14.5Z" fill="#a8c8e8" stroke="#080" stroke-width="1.2"/></svg><svg style="left:1254px;top:521px" width="18" height="18" viewBox="0 0 18 18"><path d="M15,10V15H4" stroke="#666" stroke-width="1.2" fill="none"/><circle cx="6" cy="8" r="2" fill="#8c8" stroke="#080" stroke-width="1"/></svg><svg style="left:1254px;top:550px" width="18" height="18" viewBox="0 0 18 18"><path d="M15,2V15" stroke="#555" stroke-width="1.2" stroke-dasharray="2,1.5"/><path d="M3,13H11M7,9V17" stroke="#111" stroke-width="1.3"/></svg><svg style="left:1254px;top:581px" width="18" height="18" viewBox="0 0 18 18"><path d="M1,17L5,4H9L14,17H11L10,13H5L4,17Z M6,10H9L7.5,6Z" fill="#111"/><path d="M1,16L7,11" stroke="#080" stroke-width="1"/><path d="M2,13.5L4.5,16L2,18.5L-0.5,16Z" fill="#a8c8e8" stroke="#080" stroke-width="1"/></svg><div class="a" style="left:1254px;top:610px;width:18px;height:1px;background:#dcd9d4"></div><svg style="left:1254px;top:623px" width="18" height="18" viewBox="0 0 18 18"><defs><linearGradient id="sg" x1="0" y1="0" x2="1" y2="1"><stop offset="0" stop-color="#fff"/><stop offset="1" stop-color="#aaa"/></linearGradient></defs><rect x="3.5" y="1.5" width="11" height="15" fill="url(#sg)" stroke="#111" stroke-width="1.2"/></svg><div class="a" style="left:1249px;top:648px;width:28px;height:28px;background:linear-gradient(#f4f3f1,#dedcd8);border:1px solid #b8b4ae;border-radius:4px"></div><svg style="left:1254px;top:653px" width="18" height="18" viewBox="0 0 18 18"><path d="M2.5,0V18.5M7.7,0V18.5M13.5,0V18.5M18.2,0V18.5M0.5,1H20M0.5,6.3H20M0.5,11.5H20M0.5,16.8H20" stroke="#1c1cff" stroke-width="1.2"/></svg><div class="a" style="left:1249px;top:678px;width:28px;height:28px;background:linear-gradient(#f4f3f1,#dedcd8);border:1px solid #b8b4ae;border-radius:4px"></div><svg style="left:1254px;top:683px" width="18" height="18" viewBox="0 0 18 18"><path d="M2.5,1.5V16.5M16.8,1.5V16.5M7.5,16.5L11.5,1.5" stroke="#1c1cff" stroke-width="1.3"/></svg><div class="a" style="left:1px;top:854px;width:1278px;height:61px;background:#f2f1f0"></div><div class="a" style="left:2px;top:855px;width:16px;height:16px;background:#fff"></div><svg style="left:2px;top:855px;" width="16" height="16" viewBox="0 0 16 16"><path d="M0.5,0.5L15.5,15.5M15.5,0.5L0.5,15.5" stroke="#800000" stroke-width="1.6"/></svg><div class="a" style="left:18px;top:855px;width:16px;height:16px;background:rgb(0, 0, 0)"></div><div class="a" style="left:34px;top:855px;width:16px;height:16px;background:rgb(26, 26, 26)"></div><div class="a" style="left:50px;top:855px;width:16px;height:16px;background:rgb(51, 51, 51)"></div><div class="a" style="left:66px;top:855px;width:16px;height:16px;background:rgb(77, 77, 77)"></div><div class="a" style="left:82px;top:855px;width:16px;height:16px;background:rgb(102, 102, 102)"></div><div class="a" style="left:98px;top:855px;width:16px;height:16px;background:rgb(128, 128, 128)"></div><div class="a" style="left:114px;top:855px;width:16px;height:16px;background:rgb(153, 153, 153)"></div><div class="a" style="left:130px;top:855px;width:16px;height:16px;background:rgb(179, 179, 179)"></div><div class="a" style="left:146px;top:855px;width:16px;height:16px;background:rgb(204, 204, 204)"></div><div class="a" style="left:162px;top:855px;width:16px;height:16px;background:rgb(229, 229, 229)"></div><div class="a" style="left:178px;top:855px;width:16px;height:16px;background:rgb(236, 236, 236)"></div><div class="a" style="left:194px;top:855px;width:16px;height:16px;background:rgb(242, 242, 242)"></div><div class="a" style="left:210px;top:855px;width:16px;height:16px;background:rgb(249, 249, 249)"></div><div class="a" style="left:226px;top:855px;width:16px;height:16px;background:rgb(255, 255, 255)"></div><div class="a" style="left:242px;top:855px;width:16px;height:16px;background:rgb(128, 0, 0)"></div><div class="a" style="left:258px;top:855px;width:16px;height:16px;background:rgb(255, 0, 0)"></div><div class="a" style="left:274px;top:855px;width:16px;height:16px;background:rgb(128, 128, 0)"></div><div class="a" style="left:290px;top:855px;width:16px;height:16px;background:rgb(255, 255, 0)"></div><div class="a" style="left:306px;top:855px;width:16px;height:16px;background:rgb(0, 128, 0)"></div><div class="a" style="left:322px;top:855px;width:16px;height:16px;background:rgb(0, 255, 0)"></div><div class="a" style="left:338px;top:855px;width:16px;height:16px;background:rgb(0, 128, 128)"></div><div class="a" style="left:354px;top:855px;width:16px;height:16px;background:rgb(0, 255, 255)"></div><div class="a" style="left:370px;top:855px;width:16px;height:16px;background:rgb(0, 0, 128)"></div><div class="a" style="left:386px;top:855px;width:16px;height:16px;background:rgb(0, 0, 255)"></div><div class="a" style="left:402px;top:855px;width:16px;height:16px;background:rgb(128, 0, 128)"></div><div class="a" style="left:418px;top:855px;width:16px;height:16px;background:rgb(255, 0, 255)"></div><div class="a" style="left:434px;top:855px;width:16px;height:16px;background:rgb(43, 0, 0)"></div><div class="a" style="left:450px;top:855px;width:16px;height:16px;background:rgb(85, 0, 0)"></div><div class="a" style="left:466px;top:855px;width:16px;height:16px;background:rgb(128, 0, 0)"></div><div class="a" style="left:482px;top:855px;width:16px;height:16px;background:rgb(170, 0, 0)"></div><div class="a" style="left:498px;top:855px;width:16px;height:16px;background:rgb(212, 0, 0)"></div><div class="a" style="left:514px;top:855px;width:16px;height:16px;background:rgb(255, 0, 0)"></div><div class="a" style="left:530px;top:855px;width:16px;height:16px;background:rgb(255, 42, 42)"></div><div class="a" style="left:546px;top:855px;width:16px;height:16px;background:rgb(255, 85, 85)"></div><div class="a" style="left:562px;top:855px;width:16px;height:16px;background:rgb(255, 128, 128)"></div><div class="a" style="left:578px;top:855px;width:16px;height:16px;background:rgb(255, 170, 170)"></div><div class="a" style="left:594px;top:855px;width:16px;height:16px;background:rgb(255, 213, 213)"></div><div class="a" style="left:610px;top:855px;width:16px;height:16px;background:rgb(40, 11, 11)"></div><div class="a" style="left:626px;top:855px;width:16px;height:16px;background:rgb(80, 22, 22)"></div><div class="a" style="left:642px;top:855px;width:16px;height:16px;background:rgb(120, 33, 33)"></div><div class="a" style="left:658px;top:855px;width:16px;height:16px;background:rgb(160, 44, 44)"></div><div class="a" style="left:674px;top:855px;width:16px;height:16px;background:rgb(200, 55, 55)"></div><div class="a" style="left:690px;top:855px;width:16px;height:16px;background:rgb(211, 95, 95)"></div><div class="a" style="left:706px;top:855px;width:16px;height:16px;background:rgb(222, 135, 135)"></div><div class="a" style="left:722px;top:855px;width:16px;height:16px;background:rgb(233, 175, 175)"></div><div class="a" style="left:738px;top:855px;width:16px;height:16px;background:rgb(244, 215, 215)"></div><div class="a" style="left:754px;top:855px;width:16px;height:16px;background:rgb(36, 28, 28)"></div><div class="a" style="left:770px;top:855px;width:16px;height:16px;background:rgb(72, 55, 55)"></div><div class="a" style="left:786px;top:855px;width:16px;height:16px;background:rgb(108, 83, 83)"></div><div class="a" style="left:802px;top:855px;width:16px;height:16px;background:rgb(145, 111, 111)"></div><div class="a" style="left:818px;top:855px;width:16px;height:16px;background:rgb(172, 147, 147)"></div><div class="a" style="left:834px;top:855px;width:16px;height:16px;background:rgb(200, 183, 183)"></div><div class="a" style="left:850px;top:855px;width:16px;height:16px;background:rgb(227, 219, 219)"></div><div class="a" style="left:866px;top:855px;width:16px;height:16px;background:rgb(43, 17, 0)"></div><div class="a" style="left:882px;top:855px;width:16px;height:16px;background:rgb(85, 34, 0)"></div><div class="a" style="left:898px;top:855px;width:16px;height:16px;background:rgb(128, 51, 0)"></div><div class="a" style="left:914px;top:855px;width:16px;height:16px;background:rgb(170, 68, 0)"></div><div class="a" style="left:930px;top:855px;width:16px;height:16px;background:rgb(212, 85, 0)"></div><div class="a" style="left:946px;top:855px;width:16px;height:16px;background:rgb(255, 102, 0)"></div><div class="a" style="left:962px;top:855px;width:16px;height:16px;background:rgb(255, 127, 42)"></div><div class="a" style="left:978px;top:855px;width:16px;height:16px;background:rgb(255, 153, 85)"></div><div class="a" style="left:994px;top:855px;width:16px;height:16px;background:rgb(255, 179, 128)"></div><div class="a" style="left:1010px;top:855px;width:16px;height:16px;background:rgb(255, 204, 170)"></div><div class="a" style="left:1026px;top:855px;width:16px;height:16px;background:rgb(255, 230, 213)"></div><div class="a" style="left:1042px;top:855px;width:16px;height:16px;background:rgb(40, 23, 11)"></div><div class="a" style="left:1058px;top:855px;width:16px;height:16px;background:rgb(80, 45, 22)"></div><div class="a" style="left:1074px;top:855px;width:16px;height:16px;background:rgb(120, 68, 33)"></div><div class="a" style="left:1090px;top:855px;width:16px;height:16px;background:rgb(160, 90, 44)"></div><div class="a" style="left:1106px;top:855px;width:16px;height:16px;background:rgb(200, 113, 55)"></div><div class="a" style="left:1122px;top:855px;width:16px;height:16px;background:rgb(211, 141, 95)"></div><div class="a" style="left:1138px;top:855px;width:16px;height:16px;background:rgb(222, 170, 135)"></div><div class="a" style="left:1154px;top:855px;width:16px;height:16px;background:rgb(233, 198, 175)"></div><div class="a" style="left:1170px;top:855px;width:16px;height:16px;background:rgb(244, 227, 215)"></div><div class="a" style="left:1186px;top:855px;width:16px;height:16px;background:rgb(36, 31, 28)"></div><div class="a" style="left:1202px;top:855px;width:16px;height:16px;background:rgb(72, 62, 55)"></div><div class="a" style="left:1218px;top:855px;width:16px;height:16px;background:rgb(108, 93, 83)"></div><div class="a" style="left:1234px;top:855px;width:16px;height:16px;background:rgb(145, 124, 111)"></div><div class="a" style="left:1250px;top:855px;width:16px;height:16px;background:rgb(172, 157, 147)"></div><svg style="left:1269px;top:858px;" width="8" height="10" viewBox="0 0 8 10"><path d="M6.5,0.5V9.5L1,5Z" fill="#777"/></svg><div class="a" style="left:2px;top:872px;width:1265px;height:13px;background:linear-gradient(#ebeae8,#f4f3f1);border-radius:6px"></div><svg style="left:6px;top:874px;" width="6" height="9" viewBox="0 0 6 9"><path d="M5,0.5L1,4.5L5,8.5Z" fill="#aaa"/></svg><svg style="left:1256px;top:874px;" width="6" height="9" viewBox="0 0 6 9"><path d="M1,0.5L5,4.5L1,8.5Z" fill="#555"/></svg><div class="a" style="left:15px;top:872px;width:225px;height:13px;background:linear-gradient(#f7f7f6,#dcdad7);border:1px solid #8f8b85;border-radius:6px"></div><div class="t" style="left:2.64px;top:888.35px;font-size:12px;letter-spacing:0.211px;color:#3c3c3c;font-family:'Liberation Sans',sans-serif;">Füllung:</div><div class="t" style="left:2.64px;top:902.25px;font-size:12px;letter-spacing:0.750px;color:#3c3c3c;font-family:'Liberation Sans',sans-serif;">Kontur:</div><div class="t" style="left:56.68px;top:888.35px;font-size:12px;letter-spacing:0.118px;color:#3c3c3c;font-family:'Liberation Sans',sans-serif;font-weight:bold;">Ungesetzt</div><div class="t" style="left:56.68px;top:902.25px;font-size:12px;letter-spacing:0.118px;color:#3c3c3c;font-family:'Liberation Sans',sans-serif;font-weight:bold;">Ungesetzt</div><div class="t" style="left:126.72px;top:894.30px;font-size:13px;letter-spacing:-0.260px;color:#3c3c3c;font-family:'Liberation Sans',sans-serif;">O:</div><div class="a" style="left:142px;top:891px;width:45px;height:21px;background:#fff;border:1px solid #bdb9b3;border-radius:4px"></div><div class="a" style="left:173px;top:892px;width:13px;height:19px;background:linear-gradient(#fdfdfc,#eceae7);border-left:1px solid #dad7d2;border-radius:0 3px 3px 0"></div><svg style="left:176px;top:894px;" width="8" height="15" viewBox="0 0 8 15"><path d="M1,5L4,2L7,5Z" fill="#666"/><path d="M1,9L4,12L7,9Z" fill="#666"/></svg><div class="t" style="left:146.48px;top:894.30px;font-size:13px;letter-spacing:0.000px;color:#3c3c3c;font-family:'Liberation Sans',sans-serif;">0</div><div class="a" style="left:191px;top:888px;width:1px;height:27px;background:#dcd9d4"></div><svg style="left:196px;top:895px;" width="13" height="10" viewBox="0 0 13 10"><path d="M1,6C3,2 10,2 12,6C10,9 3,9 1,6Z" fill="none" stroke="#aaa" stroke-width="1"/><circle cx="6.5" cy="6" r="2" fill="#aaa"/><path d="M3,3L2,1M6.5,2V0M10,3L11,1" stroke="#aaa" stroke-width="0.8"/></svg><svg style="left:216px;top:894px;" width="11" height="13" viewBox="0 0 11 13"><path d="M3,6V4C3,1.5 8,1.5 8,4" stroke="#bbb" stroke-width="1" fill="none"/><rect x="1.5" y="6" width="8" height="6" fill="none" stroke="#bbb" stroke-width="1"/></svg><div class="a" style="left:231px;top:889px;width:89px;height:26px;background:linear-gradient(#fbfbfa,#ecebe9);border:1px solid #bdb9b3;border-radius:4px"></div><div class="t" style="left:243.22px;top:894.30px;font-size:13px;letter-spacing:-0.122px;color:#3c3c3c;font-family:'Liberation Sans',sans-serif;">(Wurzel)</div><svg style="left:305px;top:894px;" width="8" height="15" viewBox="0 0 8 15"><path d="M1,5L4,2L7,5Z" fill="#555"/><path d="M1,10L4,13L7,10Z" fill="#555"/></svg><div class="t" style="left:326.96px;top:894.91px;font-size:14px;letter-spacing:0.643px;color:#3c3c3c;font-family:'Liberation Sans',sans-serif;font-weight:bold;">1 von 42</div><div class="t" style="left:390.63px;top:894.91px;font-size:14px;letter-spacing:0.583px;color:#3c3c3c;font-family:'Liberation Sans',sans-serif;">Knoten ausgewählt. Ziehen, um Knoten auszuwählen. Klicken, um Auswahl zu löschen</div><div class="a" style="left:1117px;top:888px;width:1px;height:27px;background:#dcd9d4"></div><div class="t" style="left:1120.07px;top:889.69px;font-size:11.5px;letter-spacing:0.000px;color:#3c3c3c;font-family:'Liberation Mono',monospace;">X:</div><div class="t" style="left:1139.99px;top:889.69px;font-size:11.5px;letter-spacing:0.156px;color:#3c3c3c;font-family:'Liberation Mono',monospace;">150,31</div><div class="t" style="left:1120.07px;top:903.09px;font-size:11.5px;letter-spacing:0.000px;color:#3c3c3c;font-family:'Liberation Mono',monospace;">Y:</div><div class="t" style="left:1140.22px;top:903.09px;font-size:11.5px;letter-spacing:0.110px;color:#3c3c3c;font-family:'Liberation Mono',monospace;">418,81</div><div class="t" style="left:1191.01px;top:893.90px;font-size:13px;letter-spacing:-0.345px;color:#3c3c3c;font-family:'Liberation Sans',sans-serif;">Z:</div><div class="a" style="left:1205px;top:891px;width:54px;height:21px;background:#fff;border:1px solid #bdb9b3;border-radius:4px"></div><div class="a" style="left:1244px;top:892px;width:14px;height:19px;background:linear-gradient(#fdfdfc,#eceae7);border-left:1px solid #dad7d2;border-radius:0 3px 3px 0"></div><svg style="left:1247px;top:894px;" width="8" height="15" viewBox="0 0 8 15"><path d="M1,5L4,2L7,5Z" fill="#666"/><path d="M1,9L4,12L7,9Z" fill="#666"/></svg><div class="t" style="left:1211.72px;top:895.71px;font-size:12px;letter-spacing:-0.173px;color:#3c3c3c;font-family:'Liberation Mono',monospace;">551%</div></body></html>
